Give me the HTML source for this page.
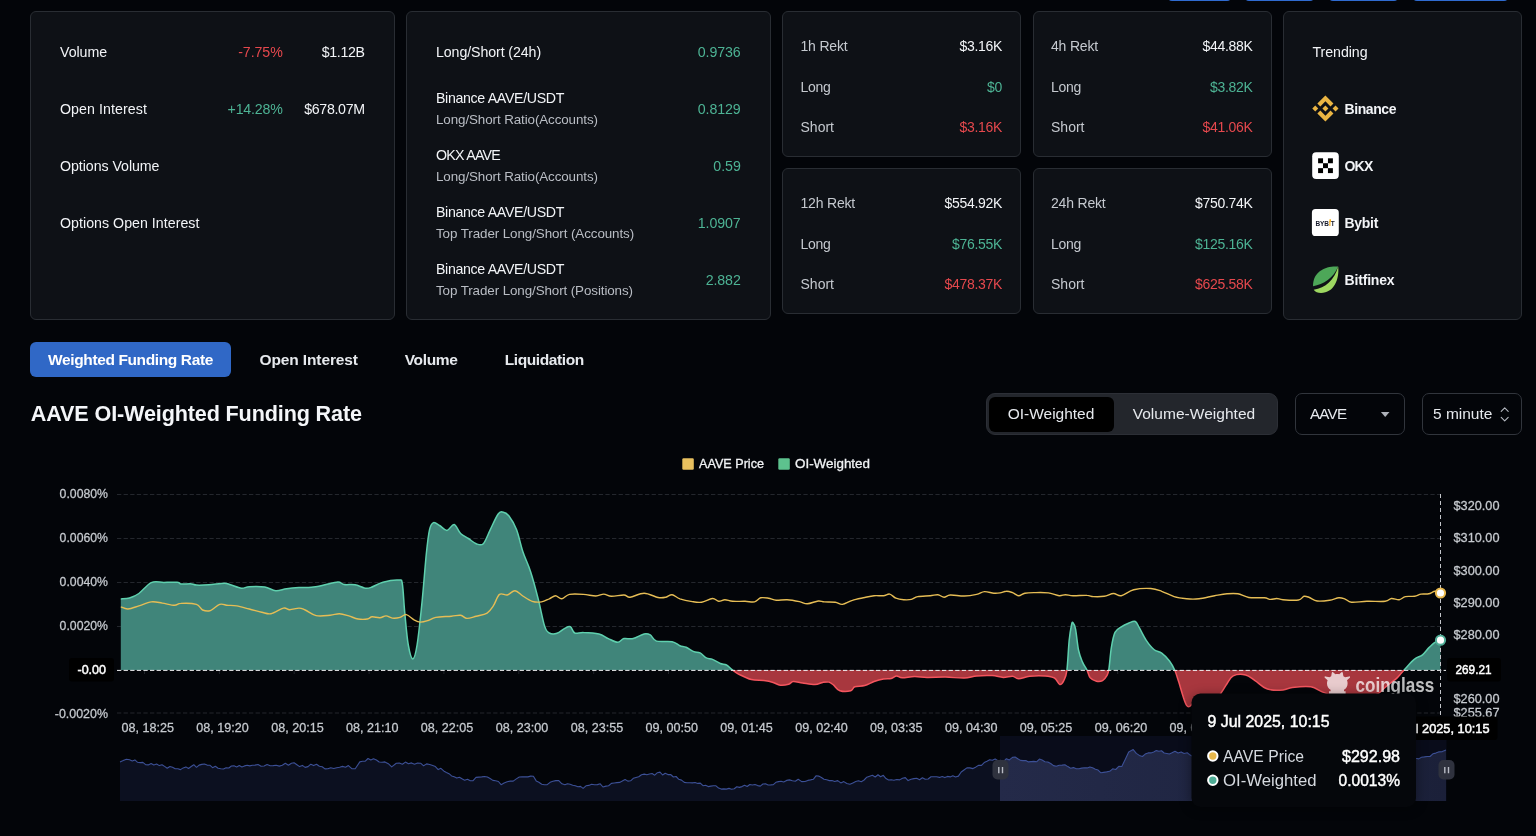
<!DOCTYPE html>
<html lang="en">
<head>
<meta charset="utf-8">
<title>AAVE OI-Weighted Funding Rate</title>
<style>
*{box-sizing:border-box;margin:0;padding:0}
html,body{width:1536px;height:836px;overflow:hidden;background:#030509;}
body{position:relative;font-family:"Liberation Sans",sans-serif;color:#f2f4f7;font-size:14px;}
#wrap{position:absolute;left:0;top:0;width:1536px;height:836px;will-change:transform;overflow:hidden}
.abs{position:absolute}
.card{position:absolute;background:#0e1116;border:1px solid #292d33;border-radius:6px;}
.t{position:absolute;white-space:nowrap;line-height:20px;height:20px;font-size:14.4px;color:#f2f4f7}
.r{text-align:right}
.g{color:#4db394}
.rd{color:#e5484d}
.m{color:#c5c9cf}
.s{color:#b9bdc4}
.b{font-weight:bold}
.topbtn{position:absolute;top:-10px;height:11px;background:#2f6bd0;border-radius:0 0 4px 4px}
.tab{position:absolute;top:342px;height:35px;line-height:35px;font-weight:bold;font-size:15.6px;color:#eef0f3;white-space:nowrap}
.tab.on{background:#3068c6;border-radius:6px;color:#fff;text-align:center}
h1{position:absolute;left:30px;top:399px;font-size:23px;line-height:30px;font-weight:bold;color:#f4f6f9;letter-spacing:-0.75px;white-space:nowrap}
.seg{position:absolute;left:986px;top:393px;width:292px;height:42px;background:#23262c;border:1px solid #2c2f36;border-radius:9px}
.seg .on{position:absolute;left:2px;top:2.500px;width:125px;height:35.500px;background:#000;border-radius:6px}
.ctl{position:absolute;font-size:16px;line-height:42px;top:393px;color:#e9ebef;white-space:nowrap}
.sel{position:absolute;top:393px;height:42px;border:1px solid #31353c;border-radius:7px;background:transparent}
svg{position:absolute;left:0;top:0}
svg text{font-family:"Liberation Sans",sans-serif}
</style>
</head>
<body>
<div id="wrap">

<!-- cut-off top buttons -->
<div class="topbtn" style="left:1168px;width:63px"></div>
<div class="topbtn" style="left:1245px;width:69px"></div>
<div class="topbtn" style="left:1329px;width:69px"></div>
<div class="topbtn" style="left:1413px;width:95px"></div>

<!-- card 1 -->
<div class="card" style="left:30px;top:11px;width:365px;height:309px"></div>

<!-- card 2 -->
<div class="card" style="left:406px;top:11px;width:365px;height:309px"></div>

<!-- rekt cards -->
<div class="card" style="left:782px;top:11px;width:239px;height:146px"></div>

<div class="card" style="left:1033px;top:11px;width:239px;height:146px"></div>

<div class="card" style="left:782px;top:168px;width:239px;height:146px"></div>

<div class="card" style="left:1033px;top:168px;width:239px;height:146px"></div>

<!-- trending -->
<div class="card" style="left:1283px;top:11px;width:239px;height:309px"></div>
<svg width="1536" height="836" viewBox="0 0 1536 836" style="pointer-events:none">
<!-- binance -->
<g transform="translate(1312.3,95.4) scale(0.2070)" fill="#eab543">
<path d="M38.73 53.2l24.59-24.58 24.6 24.6 14.3-14.31L63.32 0l-38.9 38.9zM0 63.31l14.3-14.31 14.31 14.31-14.31 14.3zM38.73 73.41l24.59 24.59 24.6-24.6 14.31 14.29-38.9 38.91-38.91-38.88zM98 63.31l14.3-14.31 14.31 14.3-14.31 14.32zM77.83 63.3L63.32 48.78 52.59 59.51l-1.24 1.23-2.54 2.54 14.51 14.5 14.51-14.47z"/>
</g>
<!-- okx -->
<rect x="1312.2" y="152.3" width="26.6" height="26.6" rx="4" fill="#fff"/>
<g fill="#000">
<rect x="1318.1" y="158.3" width="4.95" height="4.95"/><rect x="1327.95" y="158.3" width="4.95" height="4.95"/>
<rect x="1323.02" y="163.22" width="4.95" height="4.95"/>
<rect x="1318.1" y="168.15" width="4.95" height="4.95"/><rect x="1327.95" y="168.15" width="4.95" height="4.95"/>
</g>
<!-- bybit -->
<rect x="1311.9" y="209.1" width="26.9" height="26.9" rx="3.6" fill="#fff"/>
<text x="1315.4" y="226" font-family="Liberation Sans, sans-serif" font-size="7" font-weight="bold" fill="#15192a" textLength="19.4" lengthAdjust="spacingAndGlyphs">BYB<tspan fill="#f7a600">I</tspan>T</text>
<rect x="1329.5" y="219.3" width="1.4" height="2.5" fill="#f7a600"/>
<!-- bitfinex -->
<path d="M1338.2,266.6 C1327,265.600 1312.800,270.500 1313,286.300 C1323.500,284.500 1333.500,278 1338.200,266.600Z" fill="#4da758"/>
<path d="M1338.2,266.6 C1339.500,279.500 1334,293 1321,293 C1317.800,293 1315.300,291.800 1313.700,289.700 C1325.500,288.300 1334.500,280 1338.200,266.600Z" fill="#9dd761"/>
</svg>

<!-- tabs -->
<div class="tab on" style="left:30px;width:201px"></div>


<!-- controls -->
<div class="seg"><div class="on"></div></div>
<div class="sel" style="left:1295.400px;width:109.400px"></div>
<div class="sel" style="left:1422.400px;width:99.600px"></div>
<div class="t" style="top:42px;font-size:14.2px;letter-spacing:-0.05px;left:60.0px;">Volume</div>
<div class="t rd" style="top:42px;font-size:14.2px;letter-spacing:-0.08px;right:1253.3px;">-7.75%</div>
<div class="t" style="top:42px;font-size:14.2px;letter-spacing:-0.33px;right:1171.3px;">$1.12B</div>
<div class="t" style="top:99px;font-size:14.2px;letter-spacing:0.08px;left:60.0px;">Open Interest</div>
<div class="t g" style="top:99px;font-size:14.2px;letter-spacing:-0.20px;right:1253.4px;">+14.28%</div>
<div class="t" style="top:99px;font-size:14.2px;letter-spacing:-0.33px;right:1171.3px;">$678.07M</div>
<div class="t" style="top:156px;font-size:14.2px;letter-spacing:-0.05px;left:60.0px;">Options Volume</div>
<div class="t" style="top:213px;font-size:14.2px;letter-spacing:0.03px;left:60.0px;">Options Open Interest</div>
<div class="t" style="top:42px;font-size:14.2px;letter-spacing:-0.09px;left:436.0px;">Long/Short (24h)</div>
<div class="t g" style="top:42px;font-size:14.2px;letter-spacing:-0.07px;right:795.3px;">0.9736</div>
<div class="t" style="top:88px;font-size:14.2px;letter-spacing:-0.34px;left:436.0px;">Binance AAVE/USDT</div>
<div class="t s" style="top:110px;font-size:13.4px;letter-spacing:-0.10px;left:436.0px;">Long/Short Ratio(Accounts)</div>
<div class="t g" style="top:99px;font-size:14.2px;letter-spacing:-0.07px;right:795.3px;">0.8129</div>
<div class="t" style="top:145px;font-size:14.2px;letter-spacing:-0.74px;left:436.0px;">OKX AAVE</div>
<div class="t s" style="top:167px;font-size:13.4px;letter-spacing:-0.10px;left:436.0px;">Long/Short Ratio(Accounts)</div>
<div class="t g" style="top:156px;font-size:14.2px;letter-spacing:-0.03px;right:795.2px;">0.59</div>
<div class="t" style="top:202px;font-size:14.2px;letter-spacing:-0.34px;left:436.0px;">Binance AAVE/USDT</div>
<div class="t s" style="top:224px;font-size:13.4px;letter-spacing:-0.09px;left:436.0px;">Top Trader Long/Short (Accounts)</div>
<div class="t g" style="top:213px;font-size:14.2px;letter-spacing:-0.07px;right:795.3px;">1.0907</div>
<div class="t" style="top:259px;font-size:14.2px;letter-spacing:-0.34px;left:436.0px;">Binance AAVE/USDT</div>
<div class="t s" style="top:281px;font-size:13.4px;letter-spacing:-0.10px;left:436.0px;">Top Trader Long/Short (Positions)</div>
<div class="t g" style="top:270px;font-size:14.2px;letter-spacing:-0.10px;right:795.3px;">2.882</div>
<div class="t m" style="top:36px;font-size:14.0px;letter-spacing:-0.18px;left:800.5px;">1h Rekt</div>
<div class="t" style="top:36px;font-size:14.0px;letter-spacing:-0.31px;right:534.0px;">$3.16K</div>
<div class="t m" style="top:77px;font-size:14.0px;letter-spacing:-0.29px;left:800.5px;">Long</div>
<div class="t g" style="top:77px;font-size:14.0px;letter-spacing:-0.29px;right:534.0px;">$0</div>
<div class="t m" style="top:117px;font-size:14.0px;letter-spacing:0.01px;left:800.5px;">Short</div>
<div class="t rd" style="top:117px;font-size:14.0px;letter-spacing:-0.31px;right:534.0px;">$3.16K</div>
<div class="t m" style="top:36px;font-size:14.0px;letter-spacing:-0.18px;left:1051.0px;">4h Rekt</div>
<div class="t" style="top:36px;font-size:14.0px;letter-spacing:-0.31px;right:283.5px;">$44.88K</div>
<div class="t m" style="top:77px;font-size:14.0px;letter-spacing:-0.29px;left:1051.0px;">Long</div>
<div class="t g" style="top:77px;font-size:14.0px;letter-spacing:-0.31px;right:283.5px;">$3.82K</div>
<div class="t m" style="top:117px;font-size:14.0px;letter-spacing:0.01px;left:1051.0px;">Short</div>
<div class="t rd" style="top:117px;font-size:14.0px;letter-spacing:-0.31px;right:283.5px;">$41.06K</div>
<div class="t m" style="top:193px;font-size:14.0px;letter-spacing:-0.19px;left:800.5px;">12h Rekt</div>
<div class="t" style="top:193px;font-size:14.0px;letter-spacing:-0.31px;right:534.0px;">$554.92K</div>
<div class="t m" style="top:234px;font-size:14.0px;letter-spacing:-0.29px;left:800.5px;">Long</div>
<div class="t g" style="top:234px;font-size:14.0px;letter-spacing:-0.31px;right:534.0px;">$76.55K</div>
<div class="t m" style="top:274px;font-size:14.0px;letter-spacing:0.01px;left:800.5px;">Short</div>
<div class="t rd" style="top:274px;font-size:14.0px;letter-spacing:-0.31px;right:534.0px;">$478.37K</div>
<div class="t m" style="top:193px;font-size:14.0px;letter-spacing:-0.19px;left:1051.0px;">24h Rekt</div>
<div class="t" style="top:193px;font-size:14.0px;letter-spacing:-0.31px;right:283.5px;">$750.74K</div>
<div class="t m" style="top:234px;font-size:14.0px;letter-spacing:-0.29px;left:1051.0px;">Long</div>
<div class="t g" style="top:234px;font-size:14.0px;letter-spacing:-0.31px;right:283.5px;">$125.16K</div>
<div class="t m" style="top:274px;font-size:14.0px;letter-spacing:0.01px;left:1051.0px;">Short</div>
<div class="t rd" style="top:274px;font-size:14.0px;letter-spacing:-0.31px;right:283.5px;">$625.58K</div>
<div class="t" style="top:42px;font-size:14.2px;letter-spacing:-0.06px;left:1312.5px;">Trending</div>
<div class="t b" style="top:99px;font-size:14.0px;letter-spacing:-0.42px;left:1344.5px;">Binance</div>
<div class="t b" style="top:156px;font-size:14.0px;letter-spacing:-0.78px;left:1344.5px;">OKX</div>
<div class="t b" style="top:213px;font-size:14.0px;letter-spacing:-0.30px;left:1344.5px;">Bybit</div>
<div class="t b" style="top:270px;font-size:14.0px;letter-spacing:-0.17px;left:1344.5px;">Bitfinex</div>
<div class="t" style="left:48.1px;top:349px;height:22px;line-height:22px;font-size:15.5px;letter-spacing:-0.38px;color:#ffffff;font-weight:bold;">Weighted Funding Rate</div>
<div class="t" style="left:259.5px;top:349px;height:22px;line-height:22px;font-size:15.5px;letter-spacing:-0.12px;color:#e6e9ed;font-weight:bold;">Open Interest</div>
<div class="t" style="left:404.8px;top:349px;height:22px;line-height:22px;font-size:15.5px;letter-spacing:-0.36px;color:#e6e9ed;font-weight:bold;">Volume</div>
<div class="t" style="left:504.8px;top:349px;height:22px;line-height:22px;font-size:15.5px;letter-spacing:-0.41px;color:#e6e9ed;font-weight:bold;">Liquidation</div>
<div class="t" style="left:30.8px;top:399px;height:30px;line-height:30px;font-size:21.6px;letter-spacing:-0.14px;color:#f4f6f9;font-weight:bold;">AAVE OI-Weighted Funding Rate</div>
<div class="t" style="left:1007.7px;top:403px;height:22px;line-height:22px;font-size:15.5px;letter-spacing:-0.01px;color:#e6e9ed;">OI-Weighted</div>
<div class="t" style="left:1132.7px;top:403px;height:22px;line-height:22px;font-size:15.5px;letter-spacing:0.03px;color:#e6e9ed;">Volume-Weighted</div>
<div class="t" style="left:1309.9px;top:403px;height:21px;line-height:21px;font-size:15.2px;letter-spacing:-0.70px;color:#e6e9ed;">AAVE</div>
<div class="t" style="left:1433.0px;top:403px;height:22px;line-height:22px;font-size:15.5px;letter-spacing:-0.01px;color:#e6e9ed;">5 minute</div>
<svg width="1536" height="836" viewBox="0 0 1536 836" style="pointer-events:none">
<path d="M1380.9,412h8.6l-4.300,5z" fill="#aeb2b9"/>
<path d="M1501.2,411.3l3.500,-3.500 3.500,3.500M1501.2,417.400l3.500,3.500 3.500,-3.500" fill="none" stroke="#b5b9c0" stroke-width="1.100" stroke-linecap="round" stroke-linejoin="round"/>
</svg>

<svg width="1536" height="836" viewBox="0 0 1536 836">
<defs>
<clipPath id="cpos"><rect x="100" y="480" width="1360" height="190"/></clipPath>
<clipPath id="cneg"><rect x="100" y="670" width="1360" height="60"/></clipPath>
<linearGradient id="selg" gradientUnits="userSpaceOnUse" x1="1000" x2="1446" y1="0" y2="0"><stop offset="0" stop-color="#242a49"/><stop offset="0.45" stop-color="#202643"/><stop offset="1" stop-color="#1b2039"/></linearGradient>
<clipPath id="csel"><rect x="1000" y="736" width="446.5" height="65"/></clipPath>
<filter id="sh" x="-20%" y="-20%" width="140%" height="150%"><feGaussianBlur stdDeviation="6"/></filter>
</defs>
<!-- legend -->
<rect x="682.3" y="458.3" width="11.5" height="11.5" rx="1.2" fill="#e8c05f"/>
<text x="699" y="468.3" font-size="13" fill="#f1f3f5" stroke="#f1f3f5" stroke-width="0.3" textLength="65" lengthAdjust="spacingAndGlyphs">AAVE Price</text>
<rect x="778.3" y="458.3" width="11.5" height="11.5" rx="1.2" fill="#5dc28e"/>
<text x="795" y="468.3" font-size="13" fill="#f1f3f5" stroke="#f1f3f5" stroke-width="0.3" textLength="75" lengthAdjust="spacingAndGlyphs">OI-Weighted</text>
<!-- grid -->
<g stroke="#24272d" stroke-width="1" stroke-dasharray="4.3 2.3" fill="none">
<path d="M117,494.5H1441"/><path d="M117,538.5H1441"/><path d="M117,582.5H1441"/><path d="M117,626.5H1441"/><path d="M117,713H1441"/>
</g>
<!-- y labels left -->
<g font-size="13.3" fill="#c6cacf" stroke="#c6cacf" stroke-width="0.28" text-anchor="end">
<text x="108" y="498.3" textLength="48.4" lengthAdjust="spacingAndGlyphs">0.0080%</text>
<text x="108" y="542.4" textLength="48.4" lengthAdjust="spacingAndGlyphs">0.0060%</text>
<text x="108" y="586.4" textLength="48.4" lengthAdjust="spacingAndGlyphs">0.0040%</text>
<text x="108" y="630.0" textLength="48.4" lengthAdjust="spacingAndGlyphs">0.0020%</text>
<text x="108" y="717.7" textLength="53.2" lengthAdjust="spacingAndGlyphs">-0.0020%</text>
</g>
<!-- y labels right -->
<g font-size="13.3" fill="#c6cacf" stroke="#c6cacf" stroke-width="0.28">
<text x="1453.5" y="510.3" textLength="46" lengthAdjust="spacingAndGlyphs">$320.00</text>
<text x="1453.5" y="542.4" textLength="46" lengthAdjust="spacingAndGlyphs">$310.00</text>
<text x="1453.5" y="574.6" textLength="46" lengthAdjust="spacingAndGlyphs">$300.00</text>
<text x="1453.5" y="606.7" textLength="46" lengthAdjust="spacingAndGlyphs">$290.00</text>
<text x="1453.5" y="638.7" textLength="46" lengthAdjust="spacingAndGlyphs">$280.00</text>
<text x="1453.5" y="703.3" textLength="46" lengthAdjust="spacingAndGlyphs">$260.00</text>
<text x="1453.5" y="717.1" textLength="46" lengthAdjust="spacingAndGlyphs">$255.67</text>
</g>
<!-- x labels -->
<g font-size="13.3" fill="#c6cacf" stroke="#c6cacf" stroke-width="0.28" text-anchor="middle">
<text x="147.7" y="732.4" textLength="52.5" lengthAdjust="spacingAndGlyphs">08, 18:25</text>
<text x="222.6" y="732.4" textLength="52.5" lengthAdjust="spacingAndGlyphs">08, 19:20</text>
<text x="297.4" y="732.4" textLength="52.5" lengthAdjust="spacingAndGlyphs">08, 20:15</text>
<text x="372.3" y="732.4" textLength="52.5" lengthAdjust="spacingAndGlyphs">08, 21:10</text>
<text x="447.1" y="732.4" textLength="52.5" lengthAdjust="spacingAndGlyphs">08, 22:05</text>
<text x="522.0" y="732.4" textLength="52.5" lengthAdjust="spacingAndGlyphs">08, 23:00</text>
<text x="596.9" y="732.4" textLength="52.5" lengthAdjust="spacingAndGlyphs">08, 23:55</text>
<text x="671.7" y="732.4" textLength="52.5" lengthAdjust="spacingAndGlyphs">09, 00:50</text>
<text x="746.6" y="732.4" textLength="52.5" lengthAdjust="spacingAndGlyphs">09, 01:45</text>
<text x="821.4" y="732.4" textLength="52.5" lengthAdjust="spacingAndGlyphs">09, 02:40</text>
<text x="896.3" y="732.4" textLength="52.5" lengthAdjust="spacingAndGlyphs">09, 03:35</text>
<text x="971.2" y="732.4" textLength="52.5" lengthAdjust="spacingAndGlyphs">09, 04:30</text>
<text x="1046.0" y="732.4" textLength="52.5" lengthAdjust="spacingAndGlyphs">09, 05:25</text>
<text x="1120.9" y="732.4" textLength="52.5" lengthAdjust="spacingAndGlyphs">09, 06:20</text>
<text x="1195.7" y="732.4" textLength="52.5" lengthAdjust="spacingAndGlyphs">09, 07:15</text>
</g>
<!-- ticks -->
<g stroke="#20242a" stroke-width="1"><path d="M144.5,670v4"/><path d="M219.4,670v4"/><path d="M294.2,670v4"/><path d="M369.1,670v4"/><path d="M443.9,670v4"/><path d="M518.8,670v4"/><path d="M593.7,670v4"/><path d="M668.5,670v4"/><path d="M743.4,670v4"/><path d="M818.2,670v4"/><path d="M893.1,670v4"/><path d="M968.0,670v4"/><path d="M1042.8,670v4"/><path d="M1117.7,670v4"/><path d="M1192.5,670v4"/><path d="M1267.4,670v4"/><path d="M1342.3,670v4"/></g>
<!-- area -->
<g clip-path="url(#cpos)"><path d="M120.8,599.0C122.2,598.8 126.5,598.9 129.5,598.0C132.5,597.1 135.3,596.1 138.9,593.5C142.5,590.9 147.1,584.5 151.3,582.6C155.5,580.8 159.6,582.5 164.0,582.4C168.4,582.3 174.9,582.0 177.7,582.3C180.5,582.5 178.5,583.6 180.8,583.9C183.1,584.2 189.1,583.7 191.7,583.9C194.3,584.1 193.6,585.0 196.4,585.1C199.2,585.2 204.1,585.1 208.8,584.8C213.5,584.5 220.8,583.2 224.4,583.2C228.0,583.2 227.8,584.0 230.6,584.8C233.4,585.6 238.4,587.9 241.5,588.2C244.6,588.5 245.4,586.9 249.3,586.7C253.2,586.5 260.4,586.3 264.8,587.0C269.2,587.7 272.1,590.4 275.7,590.7C279.3,591.0 282.7,589.3 286.6,588.8C290.5,588.3 294.9,587.9 299.0,587.6C303.1,587.4 307.2,587.7 311.4,587.3C315.5,586.9 319.5,586.0 323.9,585.1C328.3,584.2 334.5,582.1 337.9,582.0C341.3,581.9 341.2,584.0 344.1,584.5C347.0,585.0 351.6,584.2 355.0,584.8C358.4,585.4 361.7,587.4 364.3,587.9C366.9,588.4 367.4,588.5 370.5,587.6C373.6,586.7 378.3,583.5 383.0,582.3C387.7,581.0 395.3,579.9 398.5,580.1C401.7,580.3 401.3,578.2 402.3,583.5C403.3,588.8 403.7,601.8 404.7,612.0C405.7,622.2 406.9,637.2 408.3,645.0C409.7,652.8 411.3,659.0 412.8,659.0C414.3,659.0 415.6,653.9 417.1,644.8C418.6,635.7 420.2,619.7 421.8,604.4C423.4,589.1 425.1,565.4 426.4,553.0C427.7,540.6 428.3,534.9 429.5,529.8C430.7,524.7 431.8,523.3 433.5,522.6C435.2,521.9 437.4,524.2 439.6,525.5C441.9,526.8 444.6,530.6 447.0,530.4C449.4,530.2 451.9,524.0 454.2,524.5C456.5,525.0 458.2,531.2 460.6,533.5C463.0,535.8 465.8,536.8 468.4,538.5C471.0,540.2 473.7,542.8 476.2,543.7C478.7,544.6 481.0,546.0 483.3,543.7C485.6,541.4 487.8,534.7 490.2,529.8C492.6,524.9 495.9,517.2 498.0,514.2C500.1,511.2 500.8,511.7 502.6,512.0C504.4,512.3 506.5,512.8 508.8,515.8C511.1,518.8 514.3,523.8 516.6,529.8C518.9,535.8 520.5,544.5 522.8,551.5C525.1,558.5 528.0,563.7 530.6,571.7C533.2,579.7 536.1,590.6 538.4,599.7C540.7,608.8 542.8,620.6 544.6,626.1C546.4,631.6 547.2,631.8 549.3,633.0C551.4,634.2 554.4,634.1 557.0,633.3C559.6,632.5 562.6,629.4 564.8,628.3C567.0,627.2 568.7,626.0 570.4,626.8C572.1,627.6 572.6,632.1 574.8,633.0C577.0,633.9 579.5,632.2 583.5,632.4C587.5,632.5 594.9,632.9 599.0,633.9C603.1,634.9 605.2,637.2 608.3,638.6C611.4,640.0 615.1,642.3 617.7,642.3C620.3,642.3 621.3,639.2 623.9,638.6C626.5,638.0 629.8,639.4 633.2,638.6C636.6,637.8 641.2,634.5 644.1,633.9C647.0,633.3 648.2,633.7 650.3,634.9C652.4,636.1 652.9,640.0 656.5,641.1C660.1,642.2 668.2,640.9 672.1,641.7C676.0,642.5 677.6,644.8 679.9,645.7C682.2,646.6 683.8,646.3 686.1,647.3C688.4,648.3 691.5,650.7 693.8,651.6C696.1,652.5 698.0,651.9 700.1,652.9C702.2,653.9 704.2,656.8 706.3,657.9C708.4,659.0 710.2,658.5 712.5,659.4C714.8,660.3 718.0,662.6 720.3,663.5C722.6,664.4 724.5,664.0 726.5,665.0C728.5,666.0 730.0,668.2 732.1,669.7C734.2,671.2 735.7,672.6 738.9,674.3C742.1,675.9 747.2,678.5 751.4,679.6C755.5,680.7 760.2,680.1 763.8,680.6C767.4,681.1 770.4,681.7 773.1,682.5C775.8,683.3 777.6,684.9 780.2,685.2C782.8,685.5 786.4,684.9 788.6,684.3C790.8,683.7 791.0,681.7 793.3,681.5C795.6,681.3 799.0,682.5 802.6,683.0C806.2,683.5 811.6,684.7 815.0,684.6C818.4,684.5 820.5,682.8 822.8,682.4C825.1,682.0 827.2,681.6 829.0,682.1C830.8,682.6 831.9,683.8 833.7,685.2C835.5,686.7 837.0,689.9 839.9,690.8C842.8,691.7 848.3,691.5 850.8,690.8C853.3,690.1 852.5,687.7 854.8,686.8C857.1,685.9 861.6,686.4 864.8,685.5C868.0,684.6 871.0,682.6 874.1,681.5C877.2,680.4 880.6,679.5 883.5,679.0C886.4,678.5 889.0,678.9 891.2,678.4C893.4,677.9 894.7,676.0 896.5,675.9C898.3,675.8 899.1,677.7 902.1,677.8C905.1,677.9 910.4,676.6 914.5,676.5C918.6,676.4 921.8,677.3 927.0,677.4C932.2,677.5 939.4,677.0 945.6,677.1C951.8,677.2 959.1,678.3 964.3,678.1C969.5,677.9 972.0,676.3 976.7,675.9C981.4,675.5 987.9,675.4 992.3,675.6C996.7,675.9 999.8,677.3 1003.2,677.4C1006.6,677.5 1009.9,676.0 1012.5,676.2C1015.1,676.4 1015.9,678.8 1018.7,678.8C1021.6,678.8 1025.2,676.7 1029.6,676.2C1034.0,675.7 1040.9,675.6 1045.1,675.9C1049.2,676.2 1052.0,676.6 1054.5,678.0C1057.0,679.4 1058.2,684.1 1059.8,684.5C1061.3,684.9 1062.6,683.0 1063.8,680.6C1065.0,678.2 1066.0,677.1 1066.9,670.3C1067.8,663.5 1068.4,647.5 1069.2,640.0C1070.0,632.5 1070.9,627.9 1071.5,625.0C1072.1,622.1 1072.2,621.9 1072.9,622.6C1073.6,623.3 1074.7,624.7 1075.6,629.3C1076.5,633.9 1077.4,644.6 1078.5,650.0C1079.6,655.4 1081.0,658.5 1082.4,661.9C1083.8,665.3 1085.8,667.6 1087.1,670.3C1088.4,672.9 1088.7,676.0 1090.2,677.8C1091.8,679.6 1094.3,680.7 1096.4,681.2C1098.5,681.7 1100.9,681.5 1102.6,680.6C1104.3,679.7 1105.7,677.7 1106.7,675.9C1107.7,674.1 1108.0,674.4 1108.8,669.7C1109.6,665.0 1110.3,654.1 1111.3,647.9C1112.3,641.7 1113.3,635.9 1115.0,632.4C1116.7,628.9 1119.0,628.4 1121.3,626.8C1123.6,625.2 1126.7,623.9 1129.0,623.0C1131.3,622.1 1133.6,620.7 1135.3,621.5C1137.0,622.3 1137.5,624.6 1139.3,627.7C1141.1,630.8 1143.7,636.5 1146.1,640.1C1148.5,643.7 1151.3,647.3 1153.9,649.5C1156.5,651.7 1159.1,651.3 1161.7,653.2C1164.3,655.1 1167.3,658.1 1169.5,661.0C1171.7,663.9 1173.2,666.8 1174.8,670.3C1176.3,673.8 1177.3,677.5 1178.8,682.1C1180.2,686.7 1182.2,693.8 1183.5,697.7C1184.8,701.6 1185.6,704.0 1186.6,705.4C1187.6,706.8 1188.4,707.0 1189.7,706.4C1191.0,705.8 1192.6,703.2 1194.3,702.0C1196.0,700.8 1196.4,699.7 1200.0,699.0C1203.6,698.3 1212.3,699.2 1216.0,698.0C1219.7,696.8 1220.2,693.9 1222.0,691.5C1223.8,689.1 1225.1,686.3 1227.0,683.7C1228.9,681.1 1230.1,677.4 1233.2,675.9C1236.3,674.4 1242.0,674.2 1245.6,675.0C1249.2,675.8 1251.4,678.3 1255.0,680.6C1258.6,682.9 1262.7,687.5 1267.4,689.0C1272.1,690.5 1278.8,690.2 1283.0,689.9C1287.2,689.6 1287.6,687.9 1292.3,687.4C1297.0,686.9 1305.7,686.0 1310.9,686.8C1316.1,687.6 1318.6,690.7 1323.4,692.4C1328.2,694.1 1332.9,696.1 1340.0,697.0C1347.1,697.9 1359.6,698.6 1366.0,698.0C1372.4,697.4 1375.4,695.0 1378.5,693.3C1381.6,691.6 1382.5,689.7 1384.5,688.0C1386.5,686.3 1388.4,684.7 1390.6,683.0C1392.8,681.3 1395.6,679.3 1397.4,677.6C1399.2,675.9 1400.3,674.3 1401.5,673.0C1402.7,671.7 1402.6,671.6 1404.3,669.7C1406.0,667.9 1409.5,663.9 1411.5,661.9C1413.5,659.9 1414.5,659.1 1416.3,657.9C1418.1,656.7 1420.4,656.5 1422.5,654.8C1424.6,653.1 1426.6,650.0 1428.7,647.9C1430.8,645.8 1433.0,643.6 1435.0,642.3C1437.0,641.0 1439.6,640.5 1440.5,640.1L1440.5,670.0L120.8,670.0Z" fill="#40857a"/><path d="M120.8,599.0C122.2,598.8 126.5,598.9 129.5,598.0C132.5,597.1 135.3,596.1 138.9,593.5C142.5,590.9 147.1,584.5 151.3,582.6C155.5,580.8 159.6,582.5 164.0,582.4C168.4,582.3 174.9,582.0 177.7,582.3C180.5,582.5 178.5,583.6 180.8,583.9C183.1,584.2 189.1,583.7 191.7,583.9C194.3,584.1 193.6,585.0 196.4,585.1C199.2,585.2 204.1,585.1 208.8,584.8C213.5,584.5 220.8,583.2 224.4,583.2C228.0,583.2 227.8,584.0 230.6,584.8C233.4,585.6 238.4,587.9 241.5,588.2C244.6,588.5 245.4,586.9 249.3,586.7C253.2,586.5 260.4,586.3 264.8,587.0C269.2,587.7 272.1,590.4 275.7,590.7C279.3,591.0 282.7,589.3 286.6,588.8C290.5,588.3 294.9,587.9 299.0,587.6C303.1,587.4 307.2,587.7 311.4,587.3C315.5,586.9 319.5,586.0 323.9,585.1C328.3,584.2 334.5,582.1 337.9,582.0C341.3,581.9 341.2,584.0 344.1,584.5C347.0,585.0 351.6,584.2 355.0,584.8C358.4,585.4 361.7,587.4 364.3,587.9C366.9,588.4 367.4,588.5 370.5,587.6C373.6,586.7 378.3,583.5 383.0,582.3C387.7,581.0 395.3,579.9 398.5,580.1C401.7,580.3 401.3,578.2 402.3,583.5C403.3,588.8 403.7,601.8 404.7,612.0C405.7,622.2 406.9,637.2 408.3,645.0C409.7,652.8 411.3,659.0 412.8,659.0C414.3,659.0 415.6,653.9 417.1,644.8C418.6,635.7 420.2,619.7 421.8,604.4C423.4,589.1 425.1,565.4 426.4,553.0C427.7,540.6 428.3,534.9 429.5,529.8C430.7,524.7 431.8,523.3 433.5,522.6C435.2,521.9 437.4,524.2 439.6,525.5C441.9,526.8 444.6,530.6 447.0,530.4C449.4,530.2 451.9,524.0 454.2,524.5C456.5,525.0 458.2,531.2 460.6,533.5C463.0,535.8 465.8,536.8 468.4,538.5C471.0,540.2 473.7,542.8 476.2,543.7C478.7,544.6 481.0,546.0 483.3,543.7C485.6,541.4 487.8,534.7 490.2,529.8C492.6,524.9 495.9,517.2 498.0,514.2C500.1,511.2 500.8,511.7 502.6,512.0C504.4,512.3 506.5,512.8 508.8,515.8C511.1,518.8 514.3,523.8 516.6,529.8C518.9,535.8 520.5,544.5 522.8,551.5C525.1,558.5 528.0,563.7 530.6,571.7C533.2,579.7 536.1,590.6 538.4,599.7C540.7,608.8 542.8,620.6 544.6,626.1C546.4,631.6 547.2,631.8 549.3,633.0C551.4,634.2 554.4,634.1 557.0,633.3C559.6,632.5 562.6,629.4 564.8,628.3C567.0,627.2 568.7,626.0 570.4,626.8C572.1,627.6 572.6,632.1 574.8,633.0C577.0,633.9 579.5,632.2 583.5,632.4C587.5,632.5 594.9,632.9 599.0,633.9C603.1,634.9 605.2,637.2 608.3,638.6C611.4,640.0 615.1,642.3 617.7,642.3C620.3,642.3 621.3,639.2 623.9,638.6C626.5,638.0 629.8,639.4 633.2,638.6C636.6,637.8 641.2,634.5 644.1,633.9C647.0,633.3 648.2,633.7 650.3,634.9C652.4,636.1 652.9,640.0 656.5,641.1C660.1,642.2 668.2,640.9 672.1,641.7C676.0,642.5 677.6,644.8 679.9,645.7C682.2,646.6 683.8,646.3 686.1,647.3C688.4,648.3 691.5,650.7 693.8,651.6C696.1,652.5 698.0,651.9 700.1,652.9C702.2,653.9 704.2,656.8 706.3,657.9C708.4,659.0 710.2,658.5 712.5,659.4C714.8,660.3 718.0,662.6 720.3,663.5C722.6,664.4 724.5,664.0 726.5,665.0C728.5,666.0 730.0,668.2 732.1,669.7C734.2,671.2 735.7,672.6 738.9,674.3C742.1,675.9 747.2,678.5 751.4,679.6C755.5,680.7 760.2,680.1 763.8,680.6C767.4,681.1 770.4,681.7 773.1,682.5C775.8,683.3 777.6,684.9 780.2,685.2C782.8,685.5 786.4,684.9 788.6,684.3C790.8,683.7 791.0,681.7 793.3,681.5C795.6,681.3 799.0,682.5 802.6,683.0C806.2,683.5 811.6,684.7 815.0,684.6C818.4,684.5 820.5,682.8 822.8,682.4C825.1,682.0 827.2,681.6 829.0,682.1C830.8,682.6 831.9,683.8 833.7,685.2C835.5,686.7 837.0,689.9 839.9,690.8C842.8,691.7 848.3,691.5 850.8,690.8C853.3,690.1 852.5,687.7 854.8,686.8C857.1,685.9 861.6,686.4 864.8,685.5C868.0,684.6 871.0,682.6 874.1,681.5C877.2,680.4 880.6,679.5 883.5,679.0C886.4,678.5 889.0,678.9 891.2,678.4C893.4,677.9 894.7,676.0 896.5,675.9C898.3,675.8 899.1,677.7 902.1,677.8C905.1,677.9 910.4,676.6 914.5,676.5C918.6,676.4 921.8,677.3 927.0,677.4C932.2,677.5 939.4,677.0 945.6,677.1C951.8,677.2 959.1,678.3 964.3,678.1C969.5,677.9 972.0,676.3 976.7,675.9C981.4,675.5 987.9,675.4 992.3,675.6C996.7,675.9 999.8,677.3 1003.2,677.4C1006.6,677.5 1009.9,676.0 1012.5,676.2C1015.1,676.4 1015.9,678.8 1018.7,678.8C1021.6,678.8 1025.2,676.7 1029.6,676.2C1034.0,675.7 1040.9,675.6 1045.1,675.9C1049.2,676.2 1052.0,676.6 1054.5,678.0C1057.0,679.4 1058.2,684.1 1059.8,684.5C1061.3,684.9 1062.6,683.0 1063.8,680.6C1065.0,678.2 1066.0,677.1 1066.9,670.3C1067.8,663.5 1068.4,647.5 1069.2,640.0C1070.0,632.5 1070.9,627.9 1071.5,625.0C1072.1,622.1 1072.2,621.9 1072.9,622.6C1073.6,623.3 1074.7,624.7 1075.6,629.3C1076.5,633.9 1077.4,644.6 1078.5,650.0C1079.6,655.4 1081.0,658.5 1082.4,661.9C1083.8,665.3 1085.8,667.6 1087.1,670.3C1088.4,672.9 1088.7,676.0 1090.2,677.8C1091.8,679.6 1094.3,680.7 1096.4,681.2C1098.5,681.7 1100.9,681.5 1102.6,680.6C1104.3,679.7 1105.7,677.7 1106.7,675.9C1107.7,674.1 1108.0,674.4 1108.8,669.7C1109.6,665.0 1110.3,654.1 1111.3,647.9C1112.3,641.7 1113.3,635.9 1115.0,632.4C1116.7,628.9 1119.0,628.4 1121.3,626.8C1123.6,625.2 1126.7,623.9 1129.0,623.0C1131.3,622.1 1133.6,620.7 1135.3,621.5C1137.0,622.3 1137.5,624.6 1139.3,627.7C1141.1,630.8 1143.7,636.5 1146.1,640.1C1148.5,643.7 1151.3,647.3 1153.9,649.5C1156.5,651.7 1159.1,651.3 1161.7,653.2C1164.3,655.1 1167.3,658.1 1169.5,661.0C1171.7,663.9 1173.2,666.8 1174.8,670.3C1176.3,673.8 1177.3,677.5 1178.8,682.1C1180.2,686.7 1182.2,693.8 1183.5,697.7C1184.8,701.6 1185.6,704.0 1186.6,705.4C1187.6,706.8 1188.4,707.0 1189.7,706.4C1191.0,705.8 1192.6,703.2 1194.3,702.0C1196.0,700.8 1196.4,699.7 1200.0,699.0C1203.6,698.3 1212.3,699.2 1216.0,698.0C1219.7,696.8 1220.2,693.9 1222.0,691.5C1223.8,689.1 1225.1,686.3 1227.0,683.7C1228.9,681.1 1230.1,677.4 1233.2,675.9C1236.3,674.4 1242.0,674.2 1245.6,675.0C1249.2,675.8 1251.4,678.3 1255.0,680.6C1258.6,682.9 1262.7,687.5 1267.4,689.0C1272.1,690.5 1278.8,690.2 1283.0,689.9C1287.2,689.6 1287.6,687.9 1292.3,687.4C1297.0,686.9 1305.7,686.0 1310.9,686.8C1316.1,687.6 1318.6,690.7 1323.4,692.4C1328.2,694.1 1332.9,696.1 1340.0,697.0C1347.1,697.9 1359.6,698.6 1366.0,698.0C1372.4,697.4 1375.4,695.0 1378.5,693.3C1381.6,691.6 1382.5,689.7 1384.5,688.0C1386.5,686.3 1388.4,684.7 1390.6,683.0C1392.8,681.3 1395.6,679.3 1397.4,677.6C1399.2,675.9 1400.3,674.3 1401.5,673.0C1402.7,671.7 1402.6,671.6 1404.3,669.7C1406.0,667.9 1409.5,663.9 1411.5,661.9C1413.5,659.9 1414.5,659.1 1416.3,657.9C1418.1,656.7 1420.4,656.5 1422.5,654.8C1424.6,653.1 1426.6,650.0 1428.7,647.9C1430.8,645.8 1433.0,643.6 1435.0,642.3C1437.0,641.0 1439.6,640.5 1440.5,640.1" fill="none" stroke="#5fd0ae" stroke-width="1.5"/></g>
<g clip-path="url(#cneg)"><path d="M120.8,599.0C122.2,598.8 126.5,598.9 129.5,598.0C132.5,597.1 135.3,596.1 138.9,593.5C142.5,590.9 147.1,584.5 151.3,582.6C155.5,580.8 159.6,582.5 164.0,582.4C168.4,582.3 174.9,582.0 177.7,582.3C180.5,582.5 178.5,583.6 180.8,583.9C183.1,584.2 189.1,583.7 191.7,583.9C194.3,584.1 193.6,585.0 196.4,585.1C199.2,585.2 204.1,585.1 208.8,584.8C213.5,584.5 220.8,583.2 224.4,583.2C228.0,583.2 227.8,584.0 230.6,584.8C233.4,585.6 238.4,587.9 241.5,588.2C244.6,588.5 245.4,586.9 249.3,586.7C253.2,586.5 260.4,586.3 264.8,587.0C269.2,587.7 272.1,590.4 275.7,590.7C279.3,591.0 282.7,589.3 286.6,588.8C290.5,588.3 294.9,587.9 299.0,587.6C303.1,587.4 307.2,587.7 311.4,587.3C315.5,586.9 319.5,586.0 323.9,585.1C328.3,584.2 334.5,582.1 337.9,582.0C341.3,581.9 341.2,584.0 344.1,584.5C347.0,585.0 351.6,584.2 355.0,584.8C358.4,585.4 361.7,587.4 364.3,587.9C366.9,588.4 367.4,588.5 370.5,587.6C373.6,586.7 378.3,583.5 383.0,582.3C387.7,581.0 395.3,579.9 398.5,580.1C401.7,580.3 401.3,578.2 402.3,583.5C403.3,588.8 403.7,601.8 404.7,612.0C405.7,622.2 406.9,637.2 408.3,645.0C409.7,652.8 411.3,659.0 412.8,659.0C414.3,659.0 415.6,653.9 417.1,644.8C418.6,635.7 420.2,619.7 421.8,604.4C423.4,589.1 425.1,565.4 426.4,553.0C427.7,540.6 428.3,534.9 429.5,529.8C430.7,524.7 431.8,523.3 433.5,522.6C435.2,521.9 437.4,524.2 439.6,525.5C441.9,526.8 444.6,530.6 447.0,530.4C449.4,530.2 451.9,524.0 454.2,524.5C456.5,525.0 458.2,531.2 460.6,533.5C463.0,535.8 465.8,536.8 468.4,538.5C471.0,540.2 473.7,542.8 476.2,543.7C478.7,544.6 481.0,546.0 483.3,543.7C485.6,541.4 487.8,534.7 490.2,529.8C492.6,524.9 495.9,517.2 498.0,514.2C500.1,511.2 500.8,511.7 502.6,512.0C504.4,512.3 506.5,512.8 508.8,515.8C511.1,518.8 514.3,523.8 516.6,529.8C518.9,535.8 520.5,544.5 522.8,551.5C525.1,558.5 528.0,563.7 530.6,571.7C533.2,579.7 536.1,590.6 538.4,599.7C540.7,608.8 542.8,620.6 544.6,626.1C546.4,631.6 547.2,631.8 549.3,633.0C551.4,634.2 554.4,634.1 557.0,633.3C559.6,632.5 562.6,629.4 564.8,628.3C567.0,627.2 568.7,626.0 570.4,626.8C572.1,627.6 572.6,632.1 574.8,633.0C577.0,633.9 579.5,632.2 583.5,632.4C587.5,632.5 594.9,632.9 599.0,633.9C603.1,634.9 605.2,637.2 608.3,638.6C611.4,640.0 615.1,642.3 617.7,642.3C620.3,642.3 621.3,639.2 623.9,638.6C626.5,638.0 629.8,639.4 633.2,638.6C636.6,637.8 641.2,634.5 644.1,633.9C647.0,633.3 648.2,633.7 650.3,634.9C652.4,636.1 652.9,640.0 656.5,641.1C660.1,642.2 668.2,640.9 672.1,641.7C676.0,642.5 677.6,644.8 679.9,645.7C682.2,646.6 683.8,646.3 686.1,647.3C688.4,648.3 691.5,650.7 693.8,651.6C696.1,652.5 698.0,651.9 700.1,652.9C702.2,653.9 704.2,656.8 706.3,657.9C708.4,659.0 710.2,658.5 712.5,659.4C714.8,660.3 718.0,662.6 720.3,663.5C722.6,664.4 724.5,664.0 726.5,665.0C728.5,666.0 730.0,668.2 732.1,669.7C734.2,671.2 735.7,672.6 738.9,674.3C742.1,675.9 747.2,678.5 751.4,679.6C755.5,680.7 760.2,680.1 763.8,680.6C767.4,681.1 770.4,681.7 773.1,682.5C775.8,683.3 777.6,684.9 780.2,685.2C782.8,685.5 786.4,684.9 788.6,684.3C790.8,683.7 791.0,681.7 793.3,681.5C795.6,681.3 799.0,682.5 802.6,683.0C806.2,683.5 811.6,684.7 815.0,684.6C818.4,684.5 820.5,682.8 822.8,682.4C825.1,682.0 827.2,681.6 829.0,682.1C830.8,682.6 831.9,683.8 833.7,685.2C835.5,686.7 837.0,689.9 839.9,690.8C842.8,691.7 848.3,691.5 850.8,690.8C853.3,690.1 852.5,687.7 854.8,686.8C857.1,685.9 861.6,686.4 864.8,685.5C868.0,684.6 871.0,682.6 874.1,681.5C877.2,680.4 880.6,679.5 883.5,679.0C886.4,678.5 889.0,678.9 891.2,678.4C893.4,677.9 894.7,676.0 896.5,675.9C898.3,675.8 899.1,677.7 902.1,677.8C905.1,677.9 910.4,676.6 914.5,676.5C918.6,676.4 921.8,677.3 927.0,677.4C932.2,677.5 939.4,677.0 945.6,677.1C951.8,677.2 959.1,678.3 964.3,678.1C969.5,677.9 972.0,676.3 976.7,675.9C981.4,675.5 987.9,675.4 992.3,675.6C996.7,675.9 999.8,677.3 1003.2,677.4C1006.6,677.5 1009.9,676.0 1012.5,676.2C1015.1,676.4 1015.9,678.8 1018.7,678.8C1021.6,678.8 1025.2,676.7 1029.6,676.2C1034.0,675.7 1040.9,675.6 1045.1,675.9C1049.2,676.2 1052.0,676.6 1054.5,678.0C1057.0,679.4 1058.2,684.1 1059.8,684.5C1061.3,684.9 1062.6,683.0 1063.8,680.6C1065.0,678.2 1066.0,677.1 1066.9,670.3C1067.8,663.5 1068.4,647.5 1069.2,640.0C1070.0,632.5 1070.9,627.9 1071.5,625.0C1072.1,622.1 1072.2,621.9 1072.9,622.6C1073.6,623.3 1074.7,624.7 1075.6,629.3C1076.5,633.9 1077.4,644.6 1078.5,650.0C1079.6,655.4 1081.0,658.5 1082.4,661.9C1083.8,665.3 1085.8,667.6 1087.1,670.3C1088.4,672.9 1088.7,676.0 1090.2,677.8C1091.8,679.6 1094.3,680.7 1096.4,681.2C1098.5,681.7 1100.9,681.5 1102.6,680.6C1104.3,679.7 1105.7,677.7 1106.7,675.9C1107.7,674.1 1108.0,674.4 1108.8,669.7C1109.6,665.0 1110.3,654.1 1111.3,647.9C1112.3,641.7 1113.3,635.9 1115.0,632.4C1116.7,628.9 1119.0,628.4 1121.3,626.8C1123.6,625.2 1126.7,623.9 1129.0,623.0C1131.3,622.1 1133.6,620.7 1135.3,621.5C1137.0,622.3 1137.5,624.6 1139.3,627.7C1141.1,630.8 1143.7,636.5 1146.1,640.1C1148.5,643.7 1151.3,647.3 1153.9,649.5C1156.5,651.7 1159.1,651.3 1161.7,653.2C1164.3,655.1 1167.3,658.1 1169.5,661.0C1171.7,663.9 1173.2,666.8 1174.8,670.3C1176.3,673.8 1177.3,677.5 1178.8,682.1C1180.2,686.7 1182.2,693.8 1183.5,697.7C1184.8,701.6 1185.6,704.0 1186.6,705.4C1187.6,706.8 1188.4,707.0 1189.7,706.4C1191.0,705.8 1192.6,703.2 1194.3,702.0C1196.0,700.8 1196.4,699.7 1200.0,699.0C1203.6,698.3 1212.3,699.2 1216.0,698.0C1219.7,696.8 1220.2,693.9 1222.0,691.5C1223.8,689.1 1225.1,686.3 1227.0,683.7C1228.9,681.1 1230.1,677.4 1233.2,675.9C1236.3,674.4 1242.0,674.2 1245.6,675.0C1249.2,675.8 1251.4,678.3 1255.0,680.6C1258.6,682.9 1262.7,687.5 1267.4,689.0C1272.1,690.5 1278.8,690.2 1283.0,689.9C1287.2,689.6 1287.6,687.9 1292.3,687.4C1297.0,686.9 1305.7,686.0 1310.9,686.8C1316.1,687.6 1318.6,690.7 1323.4,692.4C1328.2,694.1 1332.9,696.1 1340.0,697.0C1347.1,697.9 1359.6,698.6 1366.0,698.0C1372.4,697.4 1375.4,695.0 1378.5,693.3C1381.6,691.6 1382.5,689.7 1384.5,688.0C1386.5,686.3 1388.4,684.7 1390.6,683.0C1392.8,681.3 1395.6,679.3 1397.4,677.6C1399.2,675.9 1400.3,674.3 1401.5,673.0C1402.7,671.7 1402.6,671.6 1404.3,669.7C1406.0,667.9 1409.5,663.9 1411.5,661.9C1413.5,659.9 1414.5,659.1 1416.3,657.9C1418.1,656.7 1420.4,656.5 1422.5,654.8C1424.6,653.1 1426.6,650.0 1428.7,647.9C1430.8,645.8 1433.0,643.6 1435.0,642.3C1437.0,641.0 1439.6,640.5 1440.5,640.1L1440.5,670.0L120.8,670.0Z" fill="#a8373e"/><path d="M120.8,599.0C122.2,598.8 126.5,598.9 129.5,598.0C132.5,597.1 135.3,596.1 138.9,593.5C142.5,590.9 147.1,584.5 151.3,582.6C155.5,580.8 159.6,582.5 164.0,582.4C168.4,582.3 174.9,582.0 177.7,582.3C180.5,582.5 178.5,583.6 180.8,583.9C183.1,584.2 189.1,583.7 191.7,583.9C194.3,584.1 193.6,585.0 196.4,585.1C199.2,585.2 204.1,585.1 208.8,584.8C213.5,584.5 220.8,583.2 224.4,583.2C228.0,583.2 227.8,584.0 230.6,584.8C233.4,585.6 238.4,587.9 241.5,588.2C244.6,588.5 245.4,586.9 249.3,586.7C253.2,586.5 260.4,586.3 264.8,587.0C269.2,587.7 272.1,590.4 275.7,590.7C279.3,591.0 282.7,589.3 286.6,588.8C290.5,588.3 294.9,587.9 299.0,587.6C303.1,587.4 307.2,587.7 311.4,587.3C315.5,586.9 319.5,586.0 323.9,585.1C328.3,584.2 334.5,582.1 337.9,582.0C341.3,581.9 341.2,584.0 344.1,584.5C347.0,585.0 351.6,584.2 355.0,584.8C358.4,585.4 361.7,587.4 364.3,587.9C366.9,588.4 367.4,588.5 370.5,587.6C373.6,586.7 378.3,583.5 383.0,582.3C387.7,581.0 395.3,579.9 398.5,580.1C401.7,580.3 401.3,578.2 402.3,583.5C403.3,588.8 403.7,601.8 404.7,612.0C405.7,622.2 406.9,637.2 408.3,645.0C409.7,652.8 411.3,659.0 412.8,659.0C414.3,659.0 415.6,653.9 417.1,644.8C418.6,635.7 420.2,619.7 421.8,604.4C423.4,589.1 425.1,565.4 426.4,553.0C427.7,540.6 428.3,534.9 429.5,529.8C430.7,524.7 431.8,523.3 433.5,522.6C435.2,521.9 437.4,524.2 439.6,525.5C441.9,526.8 444.6,530.6 447.0,530.4C449.4,530.2 451.9,524.0 454.2,524.5C456.5,525.0 458.2,531.2 460.6,533.5C463.0,535.8 465.8,536.8 468.4,538.5C471.0,540.2 473.7,542.8 476.2,543.7C478.7,544.6 481.0,546.0 483.3,543.7C485.6,541.4 487.8,534.7 490.2,529.8C492.6,524.9 495.9,517.2 498.0,514.2C500.1,511.2 500.8,511.7 502.6,512.0C504.4,512.3 506.5,512.8 508.8,515.8C511.1,518.8 514.3,523.8 516.6,529.8C518.9,535.8 520.5,544.5 522.8,551.5C525.1,558.5 528.0,563.7 530.6,571.7C533.2,579.7 536.1,590.6 538.4,599.7C540.7,608.8 542.8,620.6 544.6,626.1C546.4,631.6 547.2,631.8 549.3,633.0C551.4,634.2 554.4,634.1 557.0,633.3C559.6,632.5 562.6,629.4 564.8,628.3C567.0,627.2 568.7,626.0 570.4,626.8C572.1,627.6 572.6,632.1 574.8,633.0C577.0,633.9 579.5,632.2 583.5,632.4C587.5,632.5 594.9,632.9 599.0,633.9C603.1,634.9 605.2,637.2 608.3,638.6C611.4,640.0 615.1,642.3 617.7,642.3C620.3,642.3 621.3,639.2 623.9,638.6C626.5,638.0 629.8,639.4 633.2,638.6C636.6,637.8 641.2,634.5 644.1,633.9C647.0,633.3 648.2,633.7 650.3,634.9C652.4,636.1 652.9,640.0 656.5,641.1C660.1,642.2 668.2,640.9 672.1,641.7C676.0,642.5 677.6,644.8 679.9,645.7C682.2,646.6 683.8,646.3 686.1,647.3C688.4,648.3 691.5,650.7 693.8,651.6C696.1,652.5 698.0,651.9 700.1,652.9C702.2,653.9 704.2,656.8 706.3,657.9C708.4,659.0 710.2,658.5 712.5,659.4C714.8,660.3 718.0,662.6 720.3,663.5C722.6,664.4 724.5,664.0 726.5,665.0C728.5,666.0 730.0,668.2 732.1,669.7C734.2,671.2 735.7,672.6 738.9,674.3C742.1,675.9 747.2,678.5 751.4,679.6C755.5,680.7 760.2,680.1 763.8,680.6C767.4,681.1 770.4,681.7 773.1,682.5C775.8,683.3 777.6,684.9 780.2,685.2C782.8,685.5 786.4,684.9 788.6,684.3C790.8,683.7 791.0,681.7 793.3,681.5C795.6,681.3 799.0,682.5 802.6,683.0C806.2,683.5 811.6,684.7 815.0,684.6C818.4,684.5 820.5,682.8 822.8,682.4C825.1,682.0 827.2,681.6 829.0,682.1C830.8,682.6 831.9,683.8 833.7,685.2C835.5,686.7 837.0,689.9 839.9,690.8C842.8,691.7 848.3,691.5 850.8,690.8C853.3,690.1 852.5,687.7 854.8,686.8C857.1,685.9 861.6,686.4 864.8,685.5C868.0,684.6 871.0,682.6 874.1,681.5C877.2,680.4 880.6,679.5 883.5,679.0C886.4,678.5 889.0,678.9 891.2,678.4C893.4,677.9 894.7,676.0 896.5,675.9C898.3,675.8 899.1,677.7 902.1,677.8C905.1,677.9 910.4,676.6 914.5,676.5C918.6,676.4 921.8,677.3 927.0,677.4C932.2,677.5 939.4,677.0 945.6,677.1C951.8,677.2 959.1,678.3 964.3,678.1C969.5,677.9 972.0,676.3 976.7,675.9C981.4,675.5 987.9,675.4 992.3,675.6C996.7,675.9 999.8,677.3 1003.2,677.4C1006.6,677.5 1009.9,676.0 1012.5,676.2C1015.1,676.4 1015.9,678.8 1018.7,678.8C1021.6,678.8 1025.2,676.7 1029.6,676.2C1034.0,675.7 1040.9,675.6 1045.1,675.9C1049.2,676.2 1052.0,676.6 1054.5,678.0C1057.0,679.4 1058.2,684.1 1059.8,684.5C1061.3,684.9 1062.6,683.0 1063.8,680.6C1065.0,678.2 1066.0,677.1 1066.9,670.3C1067.8,663.5 1068.4,647.5 1069.2,640.0C1070.0,632.5 1070.9,627.9 1071.5,625.0C1072.1,622.1 1072.2,621.9 1072.9,622.6C1073.6,623.3 1074.7,624.7 1075.6,629.3C1076.5,633.9 1077.4,644.6 1078.5,650.0C1079.6,655.4 1081.0,658.5 1082.4,661.9C1083.8,665.3 1085.8,667.6 1087.1,670.3C1088.4,672.9 1088.7,676.0 1090.2,677.8C1091.8,679.6 1094.3,680.7 1096.4,681.2C1098.5,681.7 1100.9,681.5 1102.6,680.6C1104.3,679.7 1105.7,677.7 1106.7,675.9C1107.7,674.1 1108.0,674.4 1108.8,669.7C1109.6,665.0 1110.3,654.1 1111.3,647.9C1112.3,641.7 1113.3,635.9 1115.0,632.4C1116.7,628.9 1119.0,628.4 1121.3,626.8C1123.6,625.2 1126.7,623.9 1129.0,623.0C1131.3,622.1 1133.6,620.7 1135.3,621.5C1137.0,622.3 1137.5,624.6 1139.3,627.7C1141.1,630.8 1143.7,636.5 1146.1,640.1C1148.5,643.7 1151.3,647.3 1153.9,649.5C1156.5,651.7 1159.1,651.3 1161.7,653.2C1164.3,655.1 1167.3,658.1 1169.5,661.0C1171.7,663.9 1173.2,666.8 1174.8,670.3C1176.3,673.8 1177.3,677.5 1178.8,682.1C1180.2,686.7 1182.2,693.8 1183.5,697.7C1184.8,701.6 1185.6,704.0 1186.6,705.4C1187.6,706.8 1188.4,707.0 1189.7,706.4C1191.0,705.8 1192.6,703.2 1194.3,702.0C1196.0,700.8 1196.4,699.7 1200.0,699.0C1203.6,698.3 1212.3,699.2 1216.0,698.0C1219.7,696.8 1220.2,693.9 1222.0,691.5C1223.8,689.1 1225.1,686.3 1227.0,683.7C1228.9,681.1 1230.1,677.4 1233.2,675.9C1236.3,674.4 1242.0,674.2 1245.6,675.0C1249.2,675.8 1251.4,678.3 1255.0,680.6C1258.6,682.9 1262.7,687.5 1267.4,689.0C1272.1,690.5 1278.8,690.2 1283.0,689.9C1287.2,689.6 1287.6,687.9 1292.3,687.4C1297.0,686.9 1305.7,686.0 1310.9,686.8C1316.1,687.6 1318.6,690.7 1323.4,692.4C1328.2,694.1 1332.9,696.1 1340.0,697.0C1347.1,697.9 1359.6,698.6 1366.0,698.0C1372.4,697.4 1375.4,695.0 1378.5,693.3C1381.6,691.6 1382.5,689.7 1384.5,688.0C1386.5,686.3 1388.4,684.7 1390.6,683.0C1392.8,681.3 1395.6,679.3 1397.4,677.6C1399.2,675.9 1400.3,674.3 1401.5,673.0C1402.7,671.7 1402.6,671.6 1404.3,669.7C1406.0,667.9 1409.5,663.9 1411.5,661.9C1413.5,659.9 1414.5,659.1 1416.3,657.9C1418.1,656.7 1420.4,656.5 1422.5,654.8C1424.6,653.1 1426.6,650.0 1428.7,647.9C1430.8,645.8 1433.0,643.6 1435.0,642.3C1437.0,641.0 1439.6,640.5 1440.5,640.1" fill="none" stroke="#f4555e" stroke-width="1.5"/></g>
<!-- zero line -->
<path d="M117,670.4H1446" stroke="#f0f1f3" stroke-width="1" stroke-dasharray="4.3 2.3" fill="none"/>
<!-- price -->
<path d="M120.8,606.9C122.0,607.2 125.0,609.2 128.0,609.0C131.0,608.8 135.0,607.1 138.9,605.9C142.8,604.7 147.4,602.4 151.3,601.9C155.2,601.4 158.3,602.5 162.2,603.1C166.1,603.7 171.5,605.2 174.6,605.3C177.7,605.3 177.2,603.5 180.8,603.4C184.4,603.2 192.8,603.3 196.4,604.4C200.0,605.5 200.3,609.0 202.6,610.0C204.9,611.0 207.6,611.5 210.4,610.6C213.2,609.7 216.8,605.3 219.7,604.4C222.5,603.5 224.7,605.0 227.5,605.3C230.3,605.5 233.2,605.3 236.8,605.9C240.4,606.5 245.2,608.0 249.3,609.0C253.5,610.0 258.1,611.4 261.7,612.2C265.3,613.0 267.4,614.4 271.0,613.7C274.6,613.0 280.4,608.8 283.5,608.1C286.6,607.4 287.1,609.7 289.7,609.7C292.3,609.7 296.4,608.1 299.0,608.1C301.6,608.1 302.3,608.8 305.2,610.0C308.1,611.2 312.0,614.7 316.1,615.6C320.2,616.5 326.2,615.6 330.1,615.3C334.0,615.0 336.3,613.6 339.4,613.7C342.5,613.8 345.7,615.0 348.8,615.9C351.9,616.8 355.0,618.5 358.1,619.0C361.2,619.5 365.1,619.4 367.4,619.0C369.7,618.6 370.0,617.0 372.1,616.8C374.2,616.6 377.6,617.9 379.9,617.7C382.2,617.6 384.0,615.8 386.1,615.9C388.2,616.0 390.0,617.9 392.3,618.1C394.6,618.4 397.7,618.0 400.0,617.4C402.3,616.8 403.9,614.2 406.3,614.6C408.7,615.0 411.8,618.6 414.1,619.9C416.4,621.1 418.0,622.0 420.3,622.1C422.6,622.2 425.4,621.3 428.0,620.5C430.6,619.7 431.9,618.1 435.8,617.4C439.7,616.7 447.2,616.6 451.4,616.2C455.5,615.9 458.1,614.9 460.7,615.3C463.3,615.7 464.3,618.2 466.9,618.4C469.5,618.5 472.8,617.1 476.2,616.2C479.6,615.3 484.2,614.8 487.1,613.1C490.0,611.4 491.2,609.0 493.3,605.9C495.4,602.8 497.2,596.2 499.5,594.4C501.8,592.6 504.7,595.6 507.3,595.0C509.9,594.4 512.4,590.5 515.0,590.7C517.6,590.9 519.9,594.2 522.8,596.0C525.7,597.8 529.1,600.3 532.2,601.3C535.3,602.3 538.6,602.3 541.5,601.9C544.4,601.5 547.0,599.8 549.3,598.8C551.6,597.8 553.4,595.7 555.5,595.7C557.6,595.7 559.4,599.0 561.7,598.8C564.0,598.6 565.9,595.1 569.5,594.4C573.1,593.7 579.1,594.1 583.5,594.4C587.9,594.7 592.5,596.0 595.9,596.0C599.3,596.0 601.1,594.1 603.7,594.1C606.3,594.1 608.0,596.1 611.4,596.3C614.8,596.4 620.8,594.9 623.9,595.0C627.0,595.1 626.7,597.5 630.1,597.2C633.5,596.9 639.4,593.2 644.1,593.2C648.8,593.2 654.5,596.8 658.1,597.5C661.7,598.2 663.6,597.7 665.9,597.2C668.2,596.7 669.8,594.4 672.1,594.7C674.4,595.0 676.5,597.6 679.9,598.8C683.3,599.9 688.7,601.0 692.3,601.6C695.9,602.2 698.2,602.7 701.6,602.2C705.0,601.7 709.6,598.6 712.5,598.5C715.4,598.4 716.6,601.1 718.7,601.3C720.8,601.5 722.6,599.7 724.9,599.7C727.2,599.7 729.3,601.0 732.7,601.3C736.1,601.6 741.5,601.2 745.1,601.3C748.7,601.4 751.9,602.5 754.5,601.9C757.1,601.3 758.4,598.4 760.7,597.8C763.0,597.2 765.9,597.8 768.5,598.2C771.1,598.6 773.1,600.0 776.2,600.3C779.3,600.5 783.2,599.5 787.1,599.7C791.0,599.9 796.1,600.9 799.5,601.6C802.9,602.3 804.2,603.9 807.3,603.8C810.4,603.7 815.4,601.3 818.2,601.0C821.1,600.7 821.5,601.7 824.4,601.9C827.2,602.1 832.3,601.8 835.3,602.2C838.3,602.6 839.5,604.7 842.4,604.4C845.2,604.1 848.7,601.4 852.4,600.3C856.1,599.1 861.2,598.3 864.8,597.5C868.4,596.7 871.0,596.0 874.1,595.7C877.2,595.4 880.9,596.0 883.5,595.7C886.1,595.4 887.6,593.7 889.7,594.1C891.8,594.5 893.6,597.3 895.9,598.2C898.2,599.1 901.1,599.5 903.7,599.7C906.3,599.9 909.1,599.9 911.4,599.4C913.7,598.9 914.6,597.2 917.7,596.6C920.8,596.0 926.7,596.0 930.1,595.7C933.5,595.4 935.6,594.5 937.9,594.7C940.2,595.0 942.0,597.2 944.1,597.2C946.2,597.2 946.9,595.2 950.3,595.0C953.7,594.8 959.9,596.1 964.3,596.0C968.7,595.9 973.3,595.1 976.7,594.4C980.1,593.7 981.6,591.8 984.5,591.6C987.4,591.4 991.2,593.0 993.8,593.2C996.4,593.4 998.0,593.2 1000.1,592.9C1002.2,592.6 1004.2,591.3 1006.3,591.3C1008.4,591.2 1010.4,591.9 1012.5,592.6C1014.6,593.3 1016.6,595.6 1018.7,595.7C1020.8,595.8 1022.1,593.7 1024.9,593.2C1027.8,592.7 1031.9,592.7 1035.8,592.6C1039.7,592.5 1044.4,592.4 1048.3,592.9C1052.2,593.4 1056.2,595.4 1059.1,595.7C1061.9,596.0 1063.1,594.7 1065.4,594.7C1067.7,594.7 1069.5,595.6 1073.1,595.7C1076.7,595.8 1083.7,595.2 1087.1,595.4C1090.5,595.5 1090.4,596.5 1093.3,596.6C1096.2,596.8 1100.8,596.8 1104.2,596.3C1107.6,595.8 1110.7,593.6 1113.5,593.5C1116.3,593.4 1117.9,596.3 1121.3,595.7C1124.7,595.1 1128.8,591.0 1133.7,589.8C1138.6,588.6 1146.1,588.2 1150.8,588.5C1155.5,588.8 1157.8,589.9 1161.7,591.3C1165.6,592.6 1169.9,595.4 1174.1,596.6C1178.2,597.9 1182.4,598.4 1186.6,598.8C1190.8,599.2 1194.3,599.3 1199.0,598.8C1203.7,598.3 1209.9,596.5 1214.6,595.7C1219.3,594.9 1223.1,594.1 1227.0,593.8C1230.9,593.5 1234.3,593.2 1237.9,593.8C1241.5,594.4 1244.4,596.8 1248.8,597.5C1253.2,598.2 1260.7,597.5 1264.3,597.8C1267.9,598.1 1268.4,599.3 1270.5,599.4C1272.6,599.5 1274.6,598.5 1276.7,598.5C1278.8,598.5 1279.4,599.5 1283.0,599.7C1286.6,600.0 1295.0,600.6 1298.5,600.0C1302.0,599.4 1302.3,596.7 1304.1,596.3C1305.9,595.9 1307.2,596.7 1309.4,597.5C1311.6,598.3 1313.8,600.5 1317.2,601.0C1320.6,601.5 1326.0,600.8 1329.6,600.3C1333.2,599.8 1336.3,598.0 1338.9,597.8C1341.5,597.6 1343.0,598.4 1345.1,599.1C1347.2,599.8 1347.8,601.8 1351.4,602.2C1355.0,602.6 1361.3,601.4 1366.9,601.3C1372.5,601.1 1381.1,601.8 1385.2,601.3C1389.3,600.8 1389.1,598.8 1391.4,598.5C1393.7,598.2 1396.9,600.0 1399.2,599.7C1401.5,599.4 1402.8,597.2 1405.4,596.6C1408.0,596.0 1412.1,596.7 1414.7,596.3C1417.3,595.9 1418.7,594.5 1421.0,594.1C1423.3,593.7 1426.4,594.3 1428.7,593.8C1431.0,593.3 1433.0,591.4 1435.0,591.3C1437.0,591.2 1439.6,592.9 1440.5,593.2" fill="none" stroke="#e6bd55" stroke-width="1.4" stroke-linejoin="round"/>
<!-- watermark -->
<g opacity="0.74" fill="#ffffff">
<path d="M1331.2,676.2 l0.600,-3.400 c0.100,-0.700 0.800,-0.900 1.300,-0.500 l2.300,2 c1.200,-0.300 2.600,-0.300 3.800,0 l2.300,-2 c0.500,-0.400 1.200,-0.200 1.300,0.500 l0.600,3.400 c0.600,0.300 1.200,0.700 1.700,1.100 l4,-0.900 c0.900,-0.200 1.300,0.700 0.700,1.300 l-2.800,2.600 c0.400,1 0.600,2 0.600,3.100 0,2.700 -1.400,5 -3.600,6.300 v1.500 h1.600 v3 h-16.600 v-3 h1.600 v-1.500 c-2.200,-1.300 -3.600,-3.600 -3.600,-6.300 0,-1.100 0.200,-2.100 0.600,-3.100 l-2.800,-2.600 c-0.600,-0.600 -0.200,-1.500 0.700,-1.300 l4,0.900 c0.500,-0.400 1.100,-0.800 1.700,-1.100z"/>
<text x="1355.5" y="691.7" font-size="20.5" font-weight="bold" textLength="78.7" lengthAdjust="spacingAndGlyphs">coinglass</text>
</g>
<!-- cursor line -->
<path d="M1440.5,494V716" stroke="#c2c5ca" stroke-width="1" stroke-dasharray="4 3" fill="none"/>
<circle cx="1440.5" cy="593" r="4.6" fill="#fff" stroke="#e8b84c" stroke-width="2"/>
<circle cx="1440.5" cy="640.2" r="4.6" fill="#fff" stroke="#4fad96" stroke-width="2"/>
<!-- axis pointer labels -->
<rect x="69" y="658" width="45" height="23.500" rx="3" fill="#000"/>
<text x="106" y="674.3" font-size="13.6" stroke="#fff" stroke-width="0.5" fill="#fff" text-anchor="end" textLength="28.500" lengthAdjust="spacingAndGlyphs">-0.00</text>
<rect x="1447" y="658" width="54" height="23.500" rx="3" fill="#000"/>
<text x="1455.500" y="674.3" font-size="13.6" stroke="#fff" stroke-width="0.5" fill="#fff" textLength="36" lengthAdjust="spacingAndGlyphs">269.21</text>
<!-- slider -->
<path d="M120.0,761.9L123.2,760.6L126.4,759.2L129.6,759.7L132.3,761.0L134.9,759.9L137.6,762.3L140.3,762.6L142.9,762.4L145.6,764.7L148.3,764.9L151.1,763.5L153.8,765.0L156.6,764.0L159.3,765.6L162.0,764.7L164.6,766.4L167.2,768.3L169.9,766.5L172.5,767.3L175.2,768.8L177.9,768.8L180.5,769.6L183.2,767.9L185.9,766.9L188.5,768.5L191.2,766.5L193.8,764.7L196.5,767.3L199.1,765.1L201.8,764.4L204.4,764.0L207.1,765.1L209.8,765.2L212.6,767.7L215.3,766.2L218.1,768.3L220.8,768.8L223.5,769.0L226.1,767.7L228.8,768.0L231.4,766.0L234.0,765.7L236.7,766.9L239.3,765.6L241.9,767.0L244.5,765.9L247.2,765.2L249.8,765.9L252.4,765.2L255.0,765.1L258.0,764.5L261.1,766.3L264.1,766.0L267.1,764.6L270.2,765.8L273.2,765.6L276.2,765.3L279.3,766.1L282.3,765.2L285.3,763.3L288.4,765.3L291.4,763.3L294.1,762.8L296.9,764.7L299.6,766.6L302.4,765.4L305.1,767.4L308.0,766.6L310.8,764.2L313.6,765.6L316.5,764.2L319.4,766.2L322.2,766.7L325.0,768.9L327.9,768.8L330.8,767.7L333.8,768.5L336.7,767.7L339.6,767.2L342.5,766.4L345.5,767.2L348.4,765.6L351.8,768.7L355.2,768.8L359.8,761.9L362.5,761.2L365.3,761.2L368.0,758.5L370.8,760.0L373.5,758.7L376.4,760.0L379.2,762.0L382.0,762.2L384.9,761.9L388.3,763.7L391.7,766.9L396.3,763.3L399.3,763.1L402.4,764.2L405.4,762.1L408.4,763.8L411.5,762.9L414.5,764.2L417.5,763.1L420.6,763.2L423.6,765.8L426.6,763.9L429.7,764.5L432.7,765.6L435.4,766.6L438.2,769.6L440.9,768.3L443.7,770.9L446.4,772.4L449.0,773.7L451.6,775.9L454.2,776.8L456.8,778.1L459.4,777.2L462.0,778.8L464.6,780.2L467.5,779.3L470.3,780.7L473.1,780.6L476.0,777.4L478.9,777.1L481.7,776.9L484.5,776.5L487.4,777.0L490.1,778.5L492.9,780.4L495.6,780.8L498.4,781.5L501.1,784.7L504.1,783.1L507.2,781.7L510.2,781.1L513.2,781.1L516.3,778.9L519.3,777.0L522.1,776.8L525.0,776.9L527.9,776.9L530.7,776.1L533.4,776.3L536.2,780.9L538.9,782.2L541.7,784.3L544.4,784.7L547.2,784.7L550.1,782.3L552.9,781.3L555.8,780.6L558.8,780.6L561.9,783.8L564.9,784.7L567.5,783.7L570.1,784.3L572.7,785.3L575.3,785.7L577.9,786.8L580.5,786.4L583.1,788.4L586.0,785.8L588.8,785.4L591.6,784.3L594.5,784.7L597.4,784.6L600.2,783.8L603.0,787.0L605.9,786.1L608.6,785.7L611.4,783.4L614.1,783.0L616.9,782.6L619.6,782.4L622.3,781.1L625.1,779.5L627.8,781.1L630.6,780.8L633.3,778.3L636.0,777.5L638.7,776.8L641.5,774.7L644.2,774.1L646.9,774.7L649.5,774.0L652.1,773.5L654.7,775.2L657.4,772.7L660.0,772.1L662.6,775.0L665.2,773.3L667.9,774.6L670.6,774.5L673.4,777.0L676.1,776.5L678.8,779.3L681.5,780.1L684.3,782.4L687.0,782.7L689.8,782.8L692.5,782.9L695.1,782.5L697.7,783.4L700.3,783.1L703.0,785.7L705.6,785.3L708.2,786.6L710.8,786.1L713.4,785.8L716.0,785.8L718.6,788.1L721.2,789.1L723.8,788.9L726.4,789.1L729.0,788.4L731.6,789.2L734.2,788.7L736.8,786.7L739.4,787.4L742.0,786.6L744.6,785.2L747.2,786.5L749.8,784.5L752.4,785.0L755.0,784.5L757.7,785.6L760.3,786.1L762.9,784.0L765.5,783.8L768.1,785.0L770.7,784.9L773.3,784.6L775.9,782.3L778.5,781.6L781.1,781.3L783.7,782.0L786.6,780.4L789.5,779.9L792.4,780.8L795.3,781.2L798.2,779.3L801.7,781.6L805.1,781.5L807.8,780.4L810.5,779.9L813.3,779.3L816.0,775.8L818.7,776.1L821.4,777.5L824.0,779.3L826.7,779.8L829.4,780.6L832.0,780.5L834.7,781.5L837.7,780.6L840.8,782.9L843.8,781.6L846.8,783.5L849.9,784.3L852.9,782.9L855.7,781.6L858.5,780.7L861.3,781.7L864.1,780.0L866.8,777.2L869.6,776.2L872.4,775.3L875.2,777.0L878.0,774.7L880.6,776.7L883.3,775.3L886.0,778.6L888.6,780.0L891.2,779.8L893.9,780.2L896.8,779.5L899.6,779.9L902.5,778.2L905.3,777.6L908.1,780.6L911.0,779.3L913.9,778.6L916.7,778.3L919.6,779.7L922.4,777.8L925.2,779.2L928.1,779.0L931.0,776.8L933.8,776.8L936.6,776.8L939.5,777.4L942.2,776.5L944.8,777.6L947.5,776.4L950.2,776.9L952.8,775.8L955.5,777.0L958.4,776.1L961.2,772.0L964.0,770.0L966.9,767.9L969.9,767.9L973.0,768.6L976.0,766.9L978.7,765.2L981.5,765.4L984.2,762.6L987.0,761.2L989.7,759.7L992.4,760.2L995.1,758.9L997.9,760.8L1000.6,760.4L1003.3,761.9L1006.4,758.7L1009.4,759.9L1012.5,757.4L1015.1,757.0L1017.8,758.8L1020.5,760.4L1023.1,760.6L1025.8,760.6L1028.4,761.9L1031.1,761.6L1033.9,761.4L1036.6,761.8L1039.4,759.1L1042.1,760.1L1044.9,761.7L1047.8,762.0L1050.7,763.5L1053.5,765.6L1056.3,766.3L1059.2,765.2L1062.1,765.1L1064.9,764.7L1067.8,766.6L1070.6,768.2L1073.5,767.6L1076.3,768.8L1079.0,768.8L1081.7,768.1L1084.5,767.7L1087.2,767.9L1089.9,766.9L1092.6,767.8L1095.4,769.2L1098.1,770.1L1100.9,772.8L1103.6,772.4L1106.6,771.9L1109.7,771.3L1112.7,768.8L1115.7,769.5L1118.8,766.4L1121.8,766.5L1125.2,759.4L1128.7,751.9L1133.2,749.6L1136.3,753.4L1139.3,755.4L1142.4,756.5L1145.2,754.1L1148.1,752.9L1150.9,752.9L1153.7,751.9L1156.3,750.6L1158.9,751.3L1161.5,750.8L1164.2,753.0L1166.8,753.5L1169.4,754.0L1172.0,752.8L1175.0,751.3L1178.1,752.9L1181.1,751.9L1184.1,753.5L1187.2,752.8L1190.2,755.1L1192.9,756.5L1195.5,756.9L1198.2,754.5L1200.8,757.1L1203.5,755.4L1206.1,755.8L1208.8,757.7L1211.4,757.2L1214.1,755.1L1216.7,756.1L1219.4,756.5L1222.0,756.1L1224.7,755.7L1227.3,756.3L1230.0,757.0L1232.6,757.6L1235.3,755.1L1237.9,756.7L1240.5,756.2L1243.2,754.6L1245.8,755.5L1248.4,756.3L1251.1,755.8L1253.7,754.1L1256.3,757.1L1258.9,756.2L1261.6,756.7L1264.2,753.6L1266.8,754.0L1269.5,753.1L1272.1,755.4L1274.7,753.5L1277.4,752.9L1280.0,754.0L1282.6,753.9L1285.3,755.8L1287.9,755.7L1290.5,754.0L1293.2,753.9L1295.8,756.7L1298.4,755.7L1301.1,756.4L1303.7,754.5L1306.3,754.6L1308.9,757.0L1311.6,756.3L1314.2,755.3L1316.8,758.4L1319.5,757.6L1322.1,758.4L1324.7,756.2L1327.4,759.0L1330.0,758.0L1332.6,756.5L1335.3,759.1L1337.9,757.7L1340.5,757.2L1343.2,757.9L1345.8,759.1L1348.4,756.8L1351.1,756.3L1353.7,757.6L1356.3,756.6L1358.9,756.1L1361.6,756.2L1364.2,755.8L1366.8,756.2L1369.5,756.6L1372.1,756.5L1374.7,758.0L1377.4,756.3L1380.0,757.0L1382.8,757.1L1385.5,756.1L1388.3,756.8L1391.0,755.8L1393.8,756.7L1396.5,756.0L1399.3,758.5L1402.0,758.0L1404.8,756.8L1407.5,757.9L1410.3,759.6L1413.0,756.9L1415.8,758.3L1418.7,758.9L1421.5,757.2L1424.3,756.9L1427.2,756.5L1430.0,756.5L1432.9,753.8L1435.8,753.1L1438.6,751.9L1442.3,751.6L1446.0,750.1L1446.0,801L120.0,801Z" fill="#0c1020"/>
<rect x="1000" y="736" width="446.5" height="65" fill="#090c1a"/>
<g clip-path="url(#csel)"><path d="M120.0,761.9L123.2,760.6L126.4,759.2L129.6,759.7L132.3,761.0L134.9,759.9L137.6,762.3L140.3,762.6L142.9,762.4L145.6,764.7L148.3,764.9L151.1,763.5L153.8,765.0L156.6,764.0L159.3,765.6L162.0,764.7L164.6,766.4L167.2,768.3L169.9,766.5L172.5,767.3L175.2,768.8L177.9,768.8L180.5,769.6L183.2,767.9L185.9,766.9L188.5,768.5L191.2,766.5L193.8,764.7L196.5,767.3L199.1,765.1L201.8,764.4L204.4,764.0L207.1,765.1L209.8,765.2L212.6,767.7L215.3,766.2L218.1,768.3L220.8,768.8L223.5,769.0L226.1,767.7L228.8,768.0L231.4,766.0L234.0,765.7L236.7,766.9L239.3,765.6L241.9,767.0L244.5,765.9L247.2,765.2L249.8,765.9L252.4,765.2L255.0,765.1L258.0,764.5L261.1,766.3L264.1,766.0L267.1,764.6L270.2,765.8L273.2,765.6L276.2,765.3L279.3,766.1L282.3,765.2L285.3,763.3L288.4,765.3L291.4,763.3L294.1,762.8L296.9,764.7L299.6,766.6L302.4,765.4L305.1,767.4L308.0,766.6L310.8,764.2L313.6,765.6L316.5,764.2L319.4,766.2L322.2,766.7L325.0,768.9L327.9,768.8L330.8,767.7L333.8,768.5L336.7,767.7L339.6,767.2L342.5,766.4L345.5,767.2L348.4,765.6L351.8,768.7L355.2,768.8L359.8,761.9L362.5,761.2L365.3,761.2L368.0,758.5L370.8,760.0L373.5,758.7L376.4,760.0L379.2,762.0L382.0,762.2L384.9,761.9L388.3,763.7L391.7,766.9L396.3,763.3L399.3,763.1L402.4,764.2L405.4,762.1L408.4,763.8L411.5,762.9L414.5,764.2L417.5,763.1L420.6,763.2L423.6,765.8L426.6,763.9L429.7,764.5L432.7,765.6L435.4,766.6L438.2,769.6L440.9,768.3L443.7,770.9L446.4,772.4L449.0,773.7L451.6,775.9L454.2,776.8L456.8,778.1L459.4,777.2L462.0,778.8L464.6,780.2L467.5,779.3L470.3,780.7L473.1,780.6L476.0,777.4L478.9,777.1L481.7,776.9L484.5,776.5L487.4,777.0L490.1,778.5L492.9,780.4L495.6,780.8L498.4,781.5L501.1,784.7L504.1,783.1L507.2,781.7L510.2,781.1L513.2,781.1L516.3,778.9L519.3,777.0L522.1,776.8L525.0,776.9L527.9,776.9L530.7,776.1L533.4,776.3L536.2,780.9L538.9,782.2L541.7,784.3L544.4,784.7L547.2,784.7L550.1,782.3L552.9,781.3L555.8,780.6L558.8,780.6L561.9,783.8L564.9,784.7L567.5,783.7L570.1,784.3L572.7,785.3L575.3,785.7L577.9,786.8L580.5,786.4L583.1,788.4L586.0,785.8L588.8,785.4L591.6,784.3L594.5,784.7L597.4,784.6L600.2,783.8L603.0,787.0L605.9,786.1L608.6,785.7L611.4,783.4L614.1,783.0L616.9,782.6L619.6,782.4L622.3,781.1L625.1,779.5L627.8,781.1L630.6,780.8L633.3,778.3L636.0,777.5L638.7,776.8L641.5,774.7L644.2,774.1L646.9,774.7L649.5,774.0L652.1,773.5L654.7,775.2L657.4,772.7L660.0,772.1L662.6,775.0L665.2,773.3L667.9,774.6L670.6,774.5L673.4,777.0L676.1,776.5L678.8,779.3L681.5,780.1L684.3,782.4L687.0,782.7L689.8,782.8L692.5,782.9L695.1,782.5L697.7,783.4L700.3,783.1L703.0,785.7L705.6,785.3L708.2,786.6L710.8,786.1L713.4,785.8L716.0,785.8L718.6,788.1L721.2,789.1L723.8,788.9L726.4,789.1L729.0,788.4L731.6,789.2L734.2,788.7L736.8,786.7L739.4,787.4L742.0,786.6L744.6,785.2L747.2,786.5L749.8,784.5L752.4,785.0L755.0,784.5L757.7,785.6L760.3,786.1L762.9,784.0L765.5,783.8L768.1,785.0L770.7,784.9L773.3,784.6L775.9,782.3L778.5,781.6L781.1,781.3L783.7,782.0L786.6,780.4L789.5,779.9L792.4,780.8L795.3,781.2L798.2,779.3L801.7,781.6L805.1,781.5L807.8,780.4L810.5,779.9L813.3,779.3L816.0,775.8L818.7,776.1L821.4,777.5L824.0,779.3L826.7,779.8L829.4,780.6L832.0,780.5L834.7,781.5L837.7,780.6L840.8,782.9L843.8,781.6L846.8,783.5L849.9,784.3L852.9,782.9L855.7,781.6L858.5,780.7L861.3,781.7L864.1,780.0L866.8,777.2L869.6,776.2L872.4,775.3L875.2,777.0L878.0,774.7L880.6,776.7L883.3,775.3L886.0,778.6L888.6,780.0L891.2,779.8L893.9,780.2L896.8,779.5L899.6,779.9L902.5,778.2L905.3,777.6L908.1,780.6L911.0,779.3L913.9,778.6L916.7,778.3L919.6,779.7L922.4,777.8L925.2,779.2L928.1,779.0L931.0,776.8L933.8,776.8L936.6,776.8L939.5,777.4L942.2,776.5L944.8,777.6L947.5,776.4L950.2,776.9L952.8,775.8L955.5,777.0L958.4,776.1L961.2,772.0L964.0,770.0L966.9,767.9L969.9,767.9L973.0,768.6L976.0,766.9L978.7,765.2L981.5,765.4L984.2,762.6L987.0,761.2L989.7,759.7L992.4,760.2L995.1,758.9L997.9,760.8L1000.6,760.4L1003.3,761.9L1006.4,758.7L1009.4,759.9L1012.5,757.4L1015.1,757.0L1017.8,758.8L1020.5,760.4L1023.1,760.6L1025.8,760.6L1028.4,761.9L1031.1,761.6L1033.9,761.4L1036.6,761.8L1039.4,759.1L1042.1,760.1L1044.9,761.7L1047.8,762.0L1050.7,763.5L1053.5,765.6L1056.3,766.3L1059.2,765.2L1062.1,765.1L1064.9,764.7L1067.8,766.6L1070.6,768.2L1073.5,767.6L1076.3,768.8L1079.0,768.8L1081.7,768.1L1084.5,767.7L1087.2,767.9L1089.9,766.9L1092.6,767.8L1095.4,769.2L1098.1,770.1L1100.9,772.8L1103.6,772.4L1106.6,771.9L1109.7,771.3L1112.7,768.8L1115.7,769.5L1118.8,766.4L1121.8,766.5L1125.2,759.4L1128.7,751.9L1133.2,749.6L1136.3,753.4L1139.3,755.4L1142.4,756.5L1145.2,754.1L1148.1,752.9L1150.9,752.9L1153.7,751.9L1156.3,750.6L1158.9,751.3L1161.5,750.8L1164.2,753.0L1166.8,753.5L1169.4,754.0L1172.0,752.8L1175.0,751.3L1178.1,752.9L1181.1,751.9L1184.1,753.5L1187.2,752.8L1190.2,755.1L1192.9,756.5L1195.5,756.9L1198.2,754.5L1200.8,757.1L1203.5,755.4L1206.1,755.8L1208.8,757.7L1211.4,757.2L1214.1,755.1L1216.7,756.1L1219.4,756.5L1222.0,756.1L1224.7,755.7L1227.3,756.3L1230.0,757.0L1232.6,757.6L1235.3,755.1L1237.9,756.7L1240.5,756.2L1243.2,754.6L1245.8,755.5L1248.4,756.3L1251.1,755.8L1253.7,754.1L1256.3,757.1L1258.9,756.2L1261.6,756.7L1264.2,753.6L1266.8,754.0L1269.5,753.1L1272.1,755.4L1274.7,753.5L1277.4,752.9L1280.0,754.0L1282.6,753.9L1285.3,755.8L1287.9,755.7L1290.5,754.0L1293.2,753.9L1295.8,756.7L1298.4,755.7L1301.1,756.4L1303.7,754.5L1306.3,754.6L1308.9,757.0L1311.6,756.3L1314.2,755.3L1316.8,758.4L1319.5,757.6L1322.1,758.4L1324.7,756.2L1327.4,759.0L1330.0,758.0L1332.6,756.5L1335.3,759.1L1337.9,757.7L1340.5,757.2L1343.2,757.9L1345.8,759.1L1348.4,756.8L1351.1,756.3L1353.7,757.6L1356.3,756.6L1358.9,756.1L1361.6,756.2L1364.2,755.8L1366.8,756.2L1369.5,756.6L1372.1,756.5L1374.7,758.0L1377.4,756.3L1380.0,757.0L1382.8,757.1L1385.5,756.1L1388.3,756.8L1391.0,755.8L1393.8,756.7L1396.5,756.0L1399.3,758.5L1402.0,758.0L1404.8,756.8L1407.5,757.9L1410.3,759.6L1413.0,756.9L1415.8,758.3L1418.7,758.9L1421.5,757.2L1424.3,756.9L1427.2,756.5L1430.0,756.5L1432.9,753.8L1435.8,753.1L1438.6,751.9L1442.3,751.6L1446.0,750.1L1446.0,801L120.0,801Z" fill="url(#selg)"/></g>
<path d="M120.0,761.9L123.2,760.6L126.4,759.2L129.6,759.7L132.3,761.0L134.9,759.9L137.6,762.3L140.3,762.6L142.9,762.4L145.6,764.7L148.3,764.9L151.1,763.5L153.8,765.0L156.6,764.0L159.3,765.6L162.0,764.7L164.6,766.4L167.2,768.3L169.9,766.5L172.5,767.3L175.2,768.8L177.9,768.8L180.5,769.6L183.2,767.9L185.9,766.9L188.5,768.5L191.2,766.5L193.8,764.7L196.5,767.3L199.1,765.1L201.8,764.4L204.4,764.0L207.1,765.1L209.8,765.2L212.6,767.7L215.3,766.2L218.1,768.3L220.8,768.8L223.5,769.0L226.1,767.7L228.8,768.0L231.4,766.0L234.0,765.7L236.7,766.9L239.3,765.6L241.9,767.0L244.5,765.9L247.2,765.2L249.8,765.9L252.4,765.2L255.0,765.1L258.0,764.5L261.1,766.3L264.1,766.0L267.1,764.6L270.2,765.8L273.2,765.6L276.2,765.3L279.3,766.1L282.3,765.2L285.3,763.3L288.4,765.3L291.4,763.3L294.1,762.8L296.9,764.7L299.6,766.6L302.4,765.4L305.1,767.4L308.0,766.6L310.8,764.2L313.6,765.6L316.5,764.2L319.4,766.2L322.2,766.7L325.0,768.9L327.9,768.8L330.8,767.7L333.8,768.5L336.7,767.7L339.6,767.2L342.5,766.4L345.5,767.2L348.4,765.6L351.8,768.7L355.2,768.8L359.8,761.9L362.5,761.2L365.3,761.2L368.0,758.5L370.8,760.0L373.5,758.7L376.4,760.0L379.2,762.0L382.0,762.2L384.9,761.9L388.3,763.7L391.7,766.9L396.3,763.3L399.3,763.1L402.4,764.2L405.4,762.1L408.4,763.8L411.5,762.9L414.5,764.2L417.5,763.1L420.6,763.2L423.6,765.8L426.6,763.9L429.7,764.5L432.7,765.6L435.4,766.6L438.2,769.6L440.9,768.3L443.7,770.9L446.4,772.4L449.0,773.7L451.6,775.9L454.2,776.8L456.8,778.1L459.4,777.2L462.0,778.8L464.6,780.2L467.5,779.3L470.3,780.7L473.1,780.6L476.0,777.4L478.9,777.1L481.7,776.9L484.5,776.5L487.4,777.0L490.1,778.5L492.9,780.4L495.6,780.8L498.4,781.5L501.1,784.7L504.1,783.1L507.2,781.7L510.2,781.1L513.2,781.1L516.3,778.9L519.3,777.0L522.1,776.8L525.0,776.9L527.9,776.9L530.7,776.1L533.4,776.3L536.2,780.9L538.9,782.2L541.7,784.3L544.4,784.7L547.2,784.7L550.1,782.3L552.9,781.3L555.8,780.6L558.8,780.6L561.9,783.8L564.9,784.7L567.5,783.7L570.1,784.3L572.7,785.3L575.3,785.7L577.9,786.8L580.5,786.4L583.1,788.4L586.0,785.8L588.8,785.4L591.6,784.3L594.5,784.7L597.4,784.6L600.2,783.8L603.0,787.0L605.9,786.1L608.6,785.7L611.4,783.4L614.1,783.0L616.9,782.6L619.6,782.4L622.3,781.1L625.1,779.5L627.8,781.1L630.6,780.8L633.3,778.3L636.0,777.5L638.7,776.8L641.5,774.7L644.2,774.1L646.9,774.7L649.5,774.0L652.1,773.5L654.7,775.2L657.4,772.7L660.0,772.1L662.6,775.0L665.2,773.3L667.9,774.6L670.6,774.5L673.4,777.0L676.1,776.5L678.8,779.3L681.5,780.1L684.3,782.4L687.0,782.7L689.8,782.8L692.5,782.9L695.1,782.5L697.7,783.4L700.3,783.1L703.0,785.7L705.6,785.3L708.2,786.6L710.8,786.1L713.4,785.8L716.0,785.8L718.6,788.1L721.2,789.1L723.8,788.9L726.4,789.1L729.0,788.4L731.6,789.2L734.2,788.7L736.8,786.7L739.4,787.4L742.0,786.6L744.6,785.2L747.2,786.5L749.8,784.5L752.4,785.0L755.0,784.5L757.7,785.6L760.3,786.1L762.9,784.0L765.5,783.8L768.1,785.0L770.7,784.9L773.3,784.6L775.9,782.3L778.5,781.6L781.1,781.3L783.7,782.0L786.6,780.4L789.5,779.9L792.4,780.8L795.3,781.2L798.2,779.3L801.7,781.6L805.1,781.5L807.8,780.4L810.5,779.9L813.3,779.3L816.0,775.8L818.7,776.1L821.4,777.5L824.0,779.3L826.7,779.8L829.4,780.6L832.0,780.5L834.7,781.5L837.7,780.6L840.8,782.9L843.8,781.6L846.8,783.5L849.9,784.3L852.9,782.9L855.7,781.6L858.5,780.7L861.3,781.7L864.1,780.0L866.8,777.2L869.6,776.2L872.4,775.3L875.2,777.0L878.0,774.7L880.6,776.7L883.3,775.3L886.0,778.6L888.6,780.0L891.2,779.8L893.9,780.2L896.8,779.5L899.6,779.9L902.5,778.2L905.3,777.6L908.1,780.6L911.0,779.3L913.9,778.6L916.7,778.3L919.6,779.7L922.4,777.8L925.2,779.2L928.1,779.0L931.0,776.8L933.8,776.8L936.6,776.8L939.5,777.4L942.2,776.5L944.8,777.6L947.5,776.4L950.2,776.9L952.8,775.8L955.5,777.0L958.4,776.1L961.2,772.0L964.0,770.0L966.9,767.9L969.9,767.9L973.0,768.6L976.0,766.9L978.7,765.2L981.5,765.4L984.2,762.6L987.0,761.2L989.7,759.7L992.4,760.2L995.1,758.9L997.9,760.8L1000.6,760.4L1003.3,761.9L1006.4,758.7L1009.4,759.9L1012.5,757.4L1015.1,757.0L1017.8,758.8L1020.5,760.4L1023.1,760.6L1025.8,760.6L1028.4,761.9L1031.1,761.6L1033.9,761.4L1036.6,761.8L1039.4,759.1L1042.1,760.1L1044.9,761.7L1047.8,762.0L1050.7,763.5L1053.5,765.6L1056.3,766.3L1059.2,765.2L1062.1,765.1L1064.9,764.7L1067.8,766.6L1070.6,768.2L1073.5,767.6L1076.3,768.8L1079.0,768.8L1081.7,768.1L1084.5,767.7L1087.2,767.9L1089.9,766.9L1092.6,767.8L1095.4,769.2L1098.1,770.1L1100.9,772.8L1103.6,772.4L1106.6,771.9L1109.7,771.3L1112.7,768.8L1115.7,769.5L1118.8,766.4L1121.8,766.5L1125.2,759.4L1128.7,751.9L1133.2,749.6L1136.3,753.4L1139.3,755.4L1142.4,756.5L1145.2,754.1L1148.1,752.9L1150.9,752.9L1153.7,751.9L1156.3,750.6L1158.9,751.3L1161.5,750.8L1164.2,753.0L1166.8,753.5L1169.4,754.0L1172.0,752.8L1175.0,751.3L1178.1,752.9L1181.1,751.9L1184.1,753.5L1187.2,752.8L1190.2,755.1L1192.9,756.5L1195.5,756.9L1198.2,754.5L1200.8,757.1L1203.5,755.4L1206.1,755.8L1208.8,757.7L1211.4,757.2L1214.1,755.1L1216.7,756.1L1219.4,756.5L1222.0,756.1L1224.7,755.7L1227.3,756.3L1230.0,757.0L1232.6,757.6L1235.3,755.1L1237.9,756.7L1240.5,756.2L1243.2,754.6L1245.8,755.5L1248.4,756.3L1251.1,755.8L1253.7,754.1L1256.3,757.1L1258.9,756.2L1261.6,756.7L1264.2,753.6L1266.8,754.0L1269.5,753.1L1272.1,755.4L1274.7,753.5L1277.4,752.9L1280.0,754.0L1282.6,753.9L1285.3,755.8L1287.9,755.7L1290.5,754.0L1293.2,753.9L1295.8,756.7L1298.4,755.7L1301.1,756.4L1303.7,754.5L1306.3,754.6L1308.9,757.0L1311.6,756.3L1314.2,755.3L1316.8,758.4L1319.5,757.6L1322.1,758.4L1324.7,756.2L1327.4,759.0L1330.0,758.0L1332.6,756.5L1335.3,759.1L1337.9,757.7L1340.5,757.2L1343.2,757.9L1345.8,759.1L1348.4,756.8L1351.1,756.3L1353.7,757.6L1356.3,756.6L1358.9,756.1L1361.6,756.2L1364.2,755.8L1366.8,756.2L1369.5,756.6L1372.1,756.5L1374.7,758.0L1377.4,756.3L1380.0,757.0L1382.8,757.1L1385.5,756.1L1388.3,756.8L1391.0,755.8L1393.8,756.7L1396.5,756.0L1399.3,758.5L1402.0,758.0L1404.8,756.8L1407.5,757.9L1410.3,759.6L1413.0,756.9L1415.8,758.3L1418.7,758.9L1421.5,757.2L1424.3,756.9L1427.2,756.5L1430.0,756.5L1432.9,753.8L1435.8,753.1L1438.6,751.9L1442.3,751.6L1446.0,750.1" fill="none" stroke="#3c5096" stroke-width="1.1" stroke-linejoin="round"/>
<g fill="#2f323e"><rect x="992.5" y="760" width="16" height="19.5" rx="5"/><rect x="1438.5" y="760" width="16" height="19.5" rx="5"/></g>
<g stroke="#b8bbc4" stroke-width="1.4"><path d="M998.8,767v6.2M1002.5,767v6.2M1444.8,767v6.2M1448.5,767v6.2"/></g>
<!-- x pointer label -->
<rect x="1384" y="716.500" width="113.500" height="23.500" rx="3" fill="#000"/>
<text x="1440.500" y="732.700" font-size="13.6" stroke="#fff" stroke-width="0.5" fill="#fff" text-anchor="middle" textLength="98" lengthAdjust="spacingAndGlyphs">9 Jul 2025, 10:15</text>
<!-- tooltip -->
<rect x="1190" y="695" width="227" height="114" rx="10" fill="#000" opacity="0.35" filter="url(#sh)"/>
<rect x="1191.5" y="693.5" width="224.5" height="113.5" rx="9" fill="#05070b"/>
<g stroke-width="0.45" paint-order="stroke">
<text x="1207.5" y="727" font-size="16.4" fill="#fff" stroke="#fff" textLength="122" lengthAdjust="spacingAndGlyphs">9 Jul 2025, 10:15</text>
<text x="1223" y="762" font-size="17" fill="#d5d9df" stroke="none" textLength="81" lengthAdjust="spacingAndGlyphs">AAVE Price</text>
<text x="1400" y="762" font-size="17" fill="#fff" stroke="#fff" text-anchor="end" textLength="58" lengthAdjust="spacingAndGlyphs">$292.98</text>
<text x="1223" y="786.3" font-size="17" fill="#d5d9df" stroke="none" textLength="93.5" lengthAdjust="spacingAndGlyphs">OI-Weighted</text>
<text x="1400" y="786.3" font-size="17" fill="#fff" stroke="#fff" text-anchor="end" textLength="61.5" lengthAdjust="spacingAndGlyphs">0.0013%</text>
</g>
<circle cx="1212.8" cy="756" r="4.7" fill="#e8b84c" stroke="#fff" stroke-width="2"/>
<circle cx="1212.8" cy="780.3" r="4.7" fill="#4fad96" stroke="#fff" stroke-width="2"/>
</svg>

</div>
</body>
</html>
